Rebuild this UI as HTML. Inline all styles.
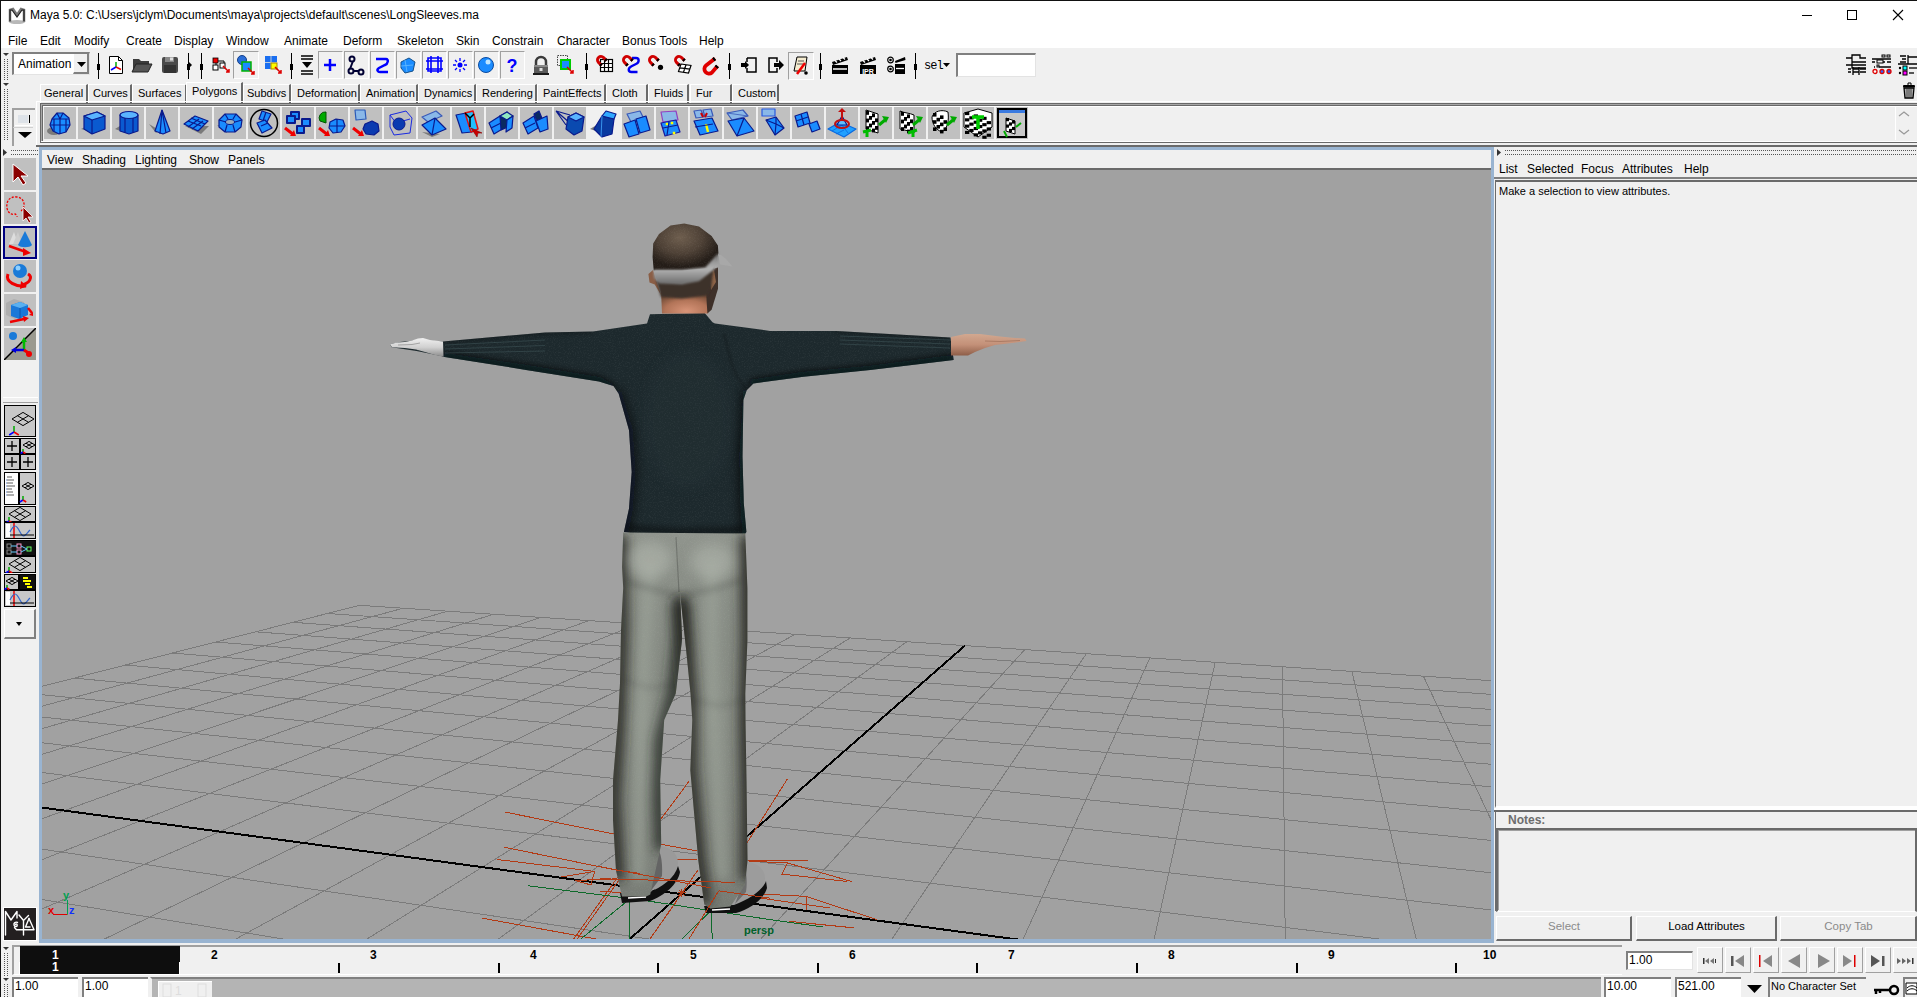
<!DOCTYPE html>
<html><head><meta charset="utf-8">
<style>
*{margin:0;padding:0;box-sizing:border-box}
html,body{width:1917px;height:997px;overflow:hidden;background:#f0f0f0;font-family:"Liberation Sans",sans-serif;font-size:12px;color:#000}
.a{position:absolute}
.t{position:absolute;white-space:nowrap;line-height:1}
.sunk{border-top:1px solid #a0a0a0;border-left:1px solid #a0a0a0;border-bottom:1px solid #fff;border-right:1px solid #fff}
.rais{border-top:1px solid #fff;border-left:1px solid #fff;border-bottom:1px solid #696969;border-right:1px solid #696969}
</style></head><body>
<!-- window border -->
<div class="a" style="left:0;top:0;width:1917px;height:1px;background:#111"></div>
<div class="a" style="left:0;top:0;width:1px;height:997px;background:#111"></div>
<!-- title bar -->
<div class="a" style="left:1px;top:1px;width:1916px;height:47px;background:#fff"></div>
<div id="title" class="t" style="left:30px;top:9px;font-size:12px">Maya 5.0: C:\Users\jclym\Documents\maya\projects\default\scenes\LongSleeves.ma</div>
<svg class="a" style="left:8px;top:7px" width="18" height="17" viewBox="0 0 18 17"><path d="M2 15V3l3-1 4 6 4-6 3 1v12" fill="none" stroke="#777" stroke-width="2.5"/><path d="M2 14V3h2l5 7 5-7h2v11" fill="none" stroke="#222" stroke-width="1.2"/><ellipse cx="9" cy="15" rx="8" ry="2" fill="#888" opacity="0.6"/></svg>
<div class="a" style="left:1802px;top:15px;width:10px;height:1px;background:#000"></div>
<div class="a" style="left:1847px;top:10px;width:10px;height:10px;border:1px solid #000"></div>
<svg class="a" style="left:1892px;top:9px" width="12" height="12" viewBox="0 0 12 12"><path d="M1 1L11 11M11 1L1 11" stroke="#000" stroke-width="1.1"/></svg>
<!-- menu -->
<div id="menu">
<div class="t" style="left:8px;top:35px">File</div>
<div class="t" style="left:40px;top:35px">Edit</div>
<div class="t" style="left:74px;top:35px">Modify</div>
<div class="t" style="left:126px;top:35px">Create</div>
<div class="t" style="left:174px;top:35px">Display</div>
<div class="t" style="left:226px;top:35px">Window</div>
<div class="t" style="left:284px;top:35px">Animate</div>
<div class="t" style="left:343px;top:35px">Deform</div>
<div class="t" style="left:397px;top:35px">Skeleton</div>
<div class="t" style="left:456px;top:35px">Skin</div>
<div class="t" style="left:492px;top:35px">Constrain</div>
<div class="t" style="left:557px;top:35px">Character</div>
<div class="t" style="left:622px;top:35px">Bonus Tools</div>
<div class="t" style="left:699px;top:35px">Help</div>
</div>

<!-- viewport panel -->
<div class="a" style="left:39px;top:147px;width:1455px;height:796px;background:#99b4d1"></div>
<div class="a" style="left:42px;top:150px;width:1449px;height:19px;background:#f0f0f0"></div>
<div class="a" style="left:42px;top:168px;width:1449px;height:2px;background:#6a6a6a"></div>
<div class="a" id="vp" style="left:42px;top:170px;width:1449px;height:769px;background:#a1a1a1;overflow:hidden"><svg width="1449" height="769" viewBox="0 0 1449 769" style="position:absolute;left:0;top:0">
<defs>
<linearGradient id="gShirt" x1="0" y1="0" x2="1" y2="0">
<stop offset="0" stop-color="#0f1619"/><stop offset="0.12" stop-color="#1f2c30"/><stop offset="0.5" stop-color="#2a3a3e"/><stop offset="0.88" stop-color="#1f2c30"/><stop offset="1" stop-color="#0f1619"/></linearGradient>
<linearGradient id="gArm" x1="0" y1="0" x2="0" y2="1">
<stop offset="0" stop-color="#1d292c"/><stop offset="0.5" stop-color="#27353a"/><stop offset="1" stop-color="#111a1d"/></linearGradient>
<linearGradient id="gLeg" x1="0" y1="0" x2="1" y2="0">
<stop offset="0" stop-color="#3d413c"/><stop offset="0.15" stop-color="#8e948c"/><stop offset="0.45" stop-color="#b3b8b0"/><stop offset="0.8" stop-color="#9ea39b"/><stop offset="1" stop-color="#3a3e39"/></linearGradient>
<linearGradient id="gHair" x1="0" y1="0" x2="0" y2="1">
<stop offset="0" stop-color="#4e4236"/><stop offset="0.6" stop-color="#6a5b4c"/><stop offset="1" stop-color="#4a3e33"/></linearGradient>
<linearGradient id="gNeck" x1="0" y1="0" x2="0" y2="1">
<stop offset="0" stop-color="#6e5440"/><stop offset="0.4" stop-color="#b98066"/><stop offset="1" stop-color="#d6957a"/></linearGradient>
<linearGradient id="gBand" x1="0" y1="0" x2="0" y2="1">
<stop offset="0" stop-color="#9a9a9a"/><stop offset="0.5" stop-color="#d2d2d2"/><stop offset="1" stop-color="#8a8a8a"/></linearGradient>
</defs>
<g shape-rendering="crispEdges">
<path d="M317.5 435.3L-3639.9 1445.4 M317.5 435.3L1775.6 532.4 M361.2 438.2L-3666.3 1530.8 M285.4 443.5L1802.5 548.9 M406.0 441.1L-3696.6 1628.8 M250.8 452.3L1832.3 567.3 M451.8 444.2L-3731.7 1742.2 M213.7 461.8L1865.3 587.7 M498.9 447.3L-3772.8 1875.2 M173.7 472.0L1902.2 610.4 M547.1 450.5L-3821.7 2033.3 M130.4 483.0L1943.7 636.0 M596.6 453.8L-3880.7 2224.2 M83.5 495.0L1990.8 665.1 M647.4 457.2L-3953.4 2459.5 M32.3 508.1L2044.6 698.3 M699.6 460.7L-4045.3 2756.6 M-23.5 522.3L2106.7 736.5 M753.2 464.3L-4164.9 3143.4 M-84.8 537.9L2179.1 781.2 M808.2 467.9L-4327.1 3668.1 M-152.3 555.2L2264.6 834.0 M864.8 471.7L-4559.6 4420.2 M-227.1 574.3L2367.3 897.3 M982.8 479.6L-5558.2 7649.8 M-403.8 619.4L2649.6 1071.4 M1044.4 483.7L-6984.9 12264.4 M-509.2 646.3L2851.2 1195.8 M1107.9 487.9L-10573.1 26390.1 M-629.0 676.9L3120.0 1361.6 M1173.2 492.2L-4536.4 26394.1 M-766.4 711.9L3496.2 1593.6 M1240.5 496.7L1500.3 26398.2 M-925.7 752.6L4060.3 1941.6 M1309.8 501.3L7537.0 26402.3 M-1112.5 800.3L4999.9 2521.1 M1381.4 506.1L13573.7 26406.3 M-1334.7 857.0L6877.2 3679.0 M1455.2 511.0L19610.4 26410.4 M-1603.2 925.5L12493.6 7143.2 M1531.4 516.1L25647.1 26414.5 M-1934.3 1010.1L39336.2 26423.7 M1610.1 521.3L31683.8 26418.5 M-2352.8 1116.9L22440.1 26412.3 M1691.5 526.7L37720.5 26422.6 M-2898.5 1256.2L5544.0 26400.9 M1775.6 532.4L43757.2 26426.7 M-3639.9 1445.4L-11352.2 26389.6" stroke="#7b7b7b" stroke-width="1" fill="none"/>
<path d="M923.0 475.6L-4920.8 5588.3 M-310.4 595.6L2492.8 974.7" stroke="#000" stroke-width="2" fill="none"/>
</g>
<g fill="none" stroke="#b33a14" stroke-width="1" shape-rendering="crispEdges">
<polyline points="463.1,642.1 571.9,664.0"/>
<polyline points="619.2,674.4 655.4,680.9"/>
<polyline points="634.0,689.3 655.4,689.3"/>
<polyline points="617.4,651.2 647.0,611.3"/>
<polyline points="462.2,677.2 573.6,700.0"/>
<polyline points="455.2,689.5 552.6,701.4 549.0,715.0 533.0,710.5"/>
<polyline points="519.0,707.0 552.6,701.4"/>
<polyline points="440.3,748.2 556.0,769.3"/>
<polyline points="531.5,769.3 577.0,705.3"/>
<polyline points="535.0,769.3 577.0,710.0"/>
<polyline points="704.6,673.5 745.6,608.6"/>
<polyline points="706.4,690.2 766.0,690.2"/>
<polyline points="706.6,691.1 745.6,693.0 740.0,704.1 805.0,711.5"/>
<polyline points="745.6,693.0 809.6,711.5"/>
<polyline points="677.0,721.7 764.0,726.4 764.0,740.3"/>
<polyline points="764.0,726.4 834.7,749.6"/>
<polyline points="747.5,751.4 812.4,757.9"/>
<polyline points="718.0,728.0 788.0,738.0"/>
<polyline points="608.0,769.0 656.3,699.5"/>
<polyline points="647.0,769.0 676.7,720.8"/>
</g>
<g fill="none" stroke="#0d6a2a" stroke-width="1" shape-rendering="crispEdges">
<polyline points="485.9,715.8 598.0,729.8 728.0,749.6 780.9,757.0"/>
<polyline points="586.8,712.3 587.6,769.3"/>
<polyline points="538.5,769.3 586.8,729.8"/>
<polyline points="669.3,738.4 670.2,769.3"/>
<polyline points="639.6,769.3 667.5,742.0"/>
</g>
<defs>
<filter id="noise" x="0" y="0" width="100%" height="100%"><feTurbulence type="fractalNoise" baseFrequency="0.9" numOctaves="2" seed="3"/><feColorMatrix values="0 0 0 0 0.5  0 0 0 0 0.5  0 0 0 0 0.5  0 0 0 0.35 0"/><feComposite in2="SourceGraphic" operator="in"/></filter>
<linearGradient id="tor" x1="0" y1="0" x2="1" y2="0"><stop offset="0" stop-color="#000" stop-opacity="0.55"/><stop offset="0.18" stop-color="#000" stop-opacity="0.15"/><stop offset="0.5" stop-color="#000" stop-opacity="0"/><stop offset="0.85" stop-color="#000" stop-opacity="0.2"/><stop offset="1" stop-color="#000" stop-opacity="0.6"/></linearGradient>
<linearGradient id="slv" x1="0" y1="0" x2="0" y2="1"><stop offset="0" stop-color="#000" stop-opacity="0.25"/><stop offset="0.45" stop-color="#fff" stop-opacity="0.03"/><stop offset="0.8" stop-color="#000" stop-opacity="0.3"/><stop offset="1" stop-color="#000" stop-opacity="0.6"/></linearGradient>
<linearGradient id="leg" x1="0" y1="0" x2="1" y2="0"><stop offset="0" stop-color="#000" stop-opacity="0.7"/><stop offset="0.08" stop-color="#000" stop-opacity="0.35"/><stop offset="0.25" stop-color="#fff" stop-opacity="0.05"/><stop offset="0.5" stop-color="#000" stop-opacity="0.05"/><stop offset="1" stop-color="#000" stop-opacity="0"/></linearGradient>
<radialGradient id="neckg" cx="0.5" cy="0.9" r="0.7"><stop offset="0" stop-color="#d89478"/><stop offset="0.6" stop-color="#b27458"/><stop offset="1" stop-color="#6e4a36"/></radialGradient>
<linearGradient id="bandg" x1="0" y1="0" x2="0" y2="1"><stop offset="0" stop-color="#707070"/><stop offset="0.5" stop-color="#b4b4b4"/><stop offset="1" stop-color="#6a6a6a"/></linearGradient><filter id="blur1" filterUnits="userSpaceOnUse" x="0" y="0" width="1449" height="769"><feGaussianBlur stdDeviation="1"/></filter>
<radialGradient id="hairg" cx="0.42" cy="0.3" r="0.62"><stop offset="0" stop-color="#6e5e4e"/><stop offset="0.55" stop-color="#4e4136"/><stop offset="1" stop-color="#241d18"/></radialGradient>
</defs>
<clipPath id="cpBody"><polygon points="348.0,174.3 358.0,172.1 377.0,170.0 401.0,171.4 503.0,162.6 551.0,161.5 605.0,153.5 608.0,144.3 662.7,143.0 670.5,152.2 673.0,153.5 728.0,160.9 794.8,160.9 908.4,167.6 911.7,190.1 828.2,200.1 761.5,206.8 711.4,213.5 704.7,220.2 701.4,230.0 700.5,286.4 701.8,333.3 704.4,362.0 701.8,365.5 613.2,366.5 581.9,362.0 587.0,338.5 589.7,302.0 587.0,260.3 576.7,223.8 571.5,216.0 557.0,211.6 484.0,199.9 401.0,186.7 399.3,186.0 374.5,180.9 349.7,177.2"/></clipPath>
<filter id="blur3" filterUnits="userSpaceOnUse" x="0" y="0" width="1449" height="769"><feGaussianBlur stdDeviation="3"/></filter>
<filter id="blur6" filterUnits="userSpaceOnUse" x="0" y="0" width="1449" height="769"><feGaussianBlur stdDeviation="6"/></filter>
<filter id="noise2" x="0" y="0" width="100%" height="100%"><feTurbulence type="fractalNoise" baseFrequency="0.8" numOctaves="2" seed="7"/><feColorMatrix values="0 0 0 0 1  0 0 0 0 1  0 0 0 0 1  1.2 0 0 0 -0.55"/><feComposite in2="SourceGraphic" operator="in"/></filter>
<g clip-path="url(#cpBody)">
<rect x="0" y="0" width="1449" height="769" fill="#1d292d"/>
<rect x="348" y="140" width="640" height="230" fill="#fff" filter="url(#noise2)" opacity="0.13"/>
<polyline fill="none" stroke="#060a0c" stroke-width="7" stroke-opacity="0.8" filter="url(#blur3)" points="401.0,186.0 484.0,198.0 557.0,210.0 571.0,218.0"/>
<polyline fill="none" stroke="#060a0c" stroke-width="7" stroke-opacity="0.8" filter="url(#blur3)" points="912.0,188.0 828.0,199.0 761.0,205.0 708.0,213.0"/>
<polyline fill="none" stroke="#0a1114" stroke-width="4" stroke-opacity="0.5" filter="url(#blur3)" points="401.0,170.0 503.0,161.0 551.0,160.0"/>
<polyline fill="none" stroke="#0a1114" stroke-width="4" stroke-opacity="0.5" filter="url(#blur3)" points="794.0,159.0 908.0,166.0"/>
<polyline fill="none" stroke="#05090b" stroke-width="12" stroke-opacity="0.7" filter="url(#blur6)" points="573.0,220.0 585.0,260.0 588.0,302.0 585.0,340.0 580.0,366.0"/>
<polyline fill="none" stroke="#05090b" stroke-width="12" stroke-opacity="0.8" filter="url(#blur6)" points="707.0,220.0 703.0,286.0 704.0,333.0 706.0,366.0"/>
<ellipse cx="646" cy="250" rx="45" ry="70" fill="#3a4c50" opacity="0.12" filter="url(#blur6)"/>
<path fill="none" stroke="#0a1012" stroke-opacity="0.18" stroke-width="3" filter="url(#blur1)" d="M682.0 164.0C687.0 180.0 688.0 202.0 704.0 218.0"/>
<polyline fill="none" stroke="#05090b" stroke-width="6" stroke-opacity="0.5" filter="url(#blur3)" points="583.0,358.0 638.0,362.0 703.0,360.0"/>
<polyline fill="none" stroke="#40555a" stroke-opacity="0.55" stroke-width="1" points="403.0,175.0 503.0,170.0"/>
<polyline fill="none" stroke="#40555a" stroke-opacity="0.55" stroke-width="1" points="798.0,166.0 908.0,170.0"/>
<polyline fill="none" stroke="#40555a" stroke-opacity="0.55" stroke-width="1" points="403.0,179.0 503.0,175.5"/>
<polyline fill="none" stroke="#40555a" stroke-opacity="0.55" stroke-width="1" points="798.0,170.0 908.0,174.0"/>
<polyline fill="none" stroke="#40555a" stroke-opacity="0.55" stroke-width="1" points="403.0,183.0 503.0,181.0"/>
<polyline fill="none" stroke="#40555a" stroke-opacity="0.55" stroke-width="1" points="798.0,174.0 908.0,178.0"/>
<polyline fill="none" stroke="#000" stroke-width="2" stroke-opacity="0.6" points="581.0,364.0 704.0,365.0"/>
</g>
<linearGradient id="handL" x1="0" y1="0" x2="0" y2="1"><stop offset="0" stop-color="#f0f0f0"/><stop offset="0.5" stop-color="#d0d0d0"/><stop offset="1" stop-color="#8a8a8a"/></linearGradient>
<polygon fill="url(#handL)" points="348.0,174.3 355.0,172.5 363.0,172.0 370.0,170.5 376.0,168.5 381.0,168.0 388.0,170.0 401.0,171.4 401.5,186.8 393.0,185.0 383.0,182.0 374.0,179.5 363.0,178.0 350.0,177.2"/>
<polyline fill="none" stroke="#777" stroke-opacity="0.7" stroke-width="0.8" points="356.0,175.0 370.0,174.5 378.0,173.0"/>
<linearGradient id="handR" x1="0" y1="0" x2="0" y2="1"><stop offset="0" stop-color="#d2a890"/><stop offset="0.5" stop-color="#c39078"/><stop offset="1" stop-color="#8e5e48"/></linearGradient>
<polygon fill="url(#handR)" points="909.0,167.0 923.0,164.0 938.0,164.0 958.0,166.5 973.0,168.0 983.0,168.5 984.5,171.0 970.0,173.0 953.0,175.0 943.0,178.0 933.0,182.0 926.0,185.5 909.0,185.5"/>
<polyline fill="none" stroke="#8a5a46" stroke-opacity="0.6" stroke-width="0.8" points="943.0,171.0 958.0,171.5 978.0,170.5"/>
<polygon fill="url(#neckg)" points="619.0,120.0 620.0,143.5 666.0,143.5 670.0,130.0 670.0,118.0"/>
<polygon fill="#3e3029" points="666.4,99.7 676.0,97.6 676.0,118.7 669.6,139.7 665.4,143.5 664.0,120.0"/>
<polygon fill="#a07050" opacity="0.8" points="667.0,102.0 672.0,100.0 674.0,112.0 669.0,120.0"/>
<polygon fill="#8a5e46" points="606.4,104.0 611.0,100.0 619.0,125.0 612.7,114.5 607.5,112.4"/>
<polygon fill="#3e3129" filter="url(#blur1)" points="614.0,110.0 640.0,113.0 671.7,98.0 669.0,118.0 665.4,125.5 640.0,128.5 619.0,127.0"/>
<polygon fill="url(#hairg)" points="611.7,100.5 610.6,87.1 611.2,73.4 617.0,64.0 628.5,55.5 642.2,53.4 657.0,56.6 669.6,66.0 675.9,75.5 676.4,83.0 671.7,99.7 663.3,98.5 640.1,100.5"/>
<rect x="610" y="53" width="66" height="48" fill="#fff" filter="url(#noise2)" opacity="0.12" clip-path="url(#cpDome)"/>
<clipPath id="cpDome"><polygon points="611.7,100.5 610.6,87.1 611.2,73.4 617.0,64.0 628.5,55.5 642.2,53.4 657.0,56.6 669.6,66.0 675.9,75.5 676.4,83.0 671.7,99.7 663.3,98.5 640.1,100.5"/></clipPath>
<polygon fill="url(#bandg)" filter="url(#blur1)" points="611.7,99.7 640.1,99.7 663.3,97.6 676.4,82.9 676.4,95.5 671.7,99.7 657.0,111.3 640.0,114.5 617.0,113.4 612.0,108.0"/>
<polygon fill="#a8a8a8" points="676.4,84.5 679.0,85.0 684.0,89.0 690.6,96.6 678.0,94.5"/>
<path fill="#9a9a9a" d="M613.0 676.0 C626.0 675.0 636.0 682.0 636.0 693.0 C636.0 703.0 627.0 711.0 614.0 719.0 L598.0 726.0 L613.0 700.0 Z"/>
<path fill="#000" opacity="0.35" d="M613.0 676.0 C618.0 678.0 621.0 690.0 620.0 706.0 L608.0 722.0 L598.0 726.0 L613.0 700.0 Z"/>
<path fill="#101010" d="M578.0 723.0 L606.0 723.0 C620.0 717.0 633.0 708.0 636.0 696.0 L638.0 702.0 C636.0 714.0 622.0 726.0 608.0 731.0 L580.0 733.0 Z"/>
<path fill="#9c9c9c" d="M700.0 692.0 C714.0 691.0 723.0 698.0 723.0 709.0 C723.0 719.0 712.0 727.0 698.0 734.0 L684.0 738.0 L700.0 715.0 Z"/>
<path fill="#000" opacity="0.3" d="M700.0 692.0 C704.0 696.0 706.0 710.0 704.0 722.0 L693.0 734.0 L700.0 715.0 Z"/>
<path fill="#101010" d="M662.0 736.0 L692.0 735.0 C708.0 729.0 721.0 720.0 724.0 711.0 L725.0 718.0 C722.0 729.0 708.0 739.0 694.0 743.0 L664.0 743.0 Z"/>
<polyline fill="none" stroke="#fff" stroke-width="1.5" points="586.0,728.0 604.0,727.0"/>
<polyline fill="none" stroke="#fff" stroke-width="1.5" points="670.0,740.0 688.0,739.0"/>
<clipPath id="cpLegs"><polygon points="581.2,362.4 638.0,363.0 638.0,422.4 640.1,468.7 633.8,523.4 622.2,550.0 618.2,610.2 619.2,674.4 608.2,724.5 604.2,726.5 580.0,726.5 574.0,700.5 571.0,650.3 571.0,610.2 576.0,550.0 578.0,513.0 579.0,460.0 581.2,418.0 580.1,397.0"/><polygon points="638.0,363.0 703.3,363.4 705.4,418.0 705.4,470.8 703.3,523.4 703.5,550.0 704.5,610.2 705.5,690.4 703.0,715.0 688.4,736.6 668.4,738.6 662.3,734.6 656.3,690.4 648.3,600.2 650.3,550.0 648.5,523.4 644.3,481.3 638.0,422.4"/></clipPath>
<g clip-path="url(#cpLegs)">
<rect x="0" y="0" width="1449" height="769" fill="#878c84"/>
<linearGradient id="legv" x1="0" y1="0" x2="0" y2="1"><stop offset="0" stop-color="#fff" stop-opacity="0.08"/><stop offset="0.5" stop-color="#000" stop-opacity="0"/><stop offset="1" stop-color="#000" stop-opacity="0.12"/></linearGradient>
<rect x="568" y="360" width="140" height="380" fill="url(#legv)"/>
<rect x="568" y="360" width="140" height="390" fill="#fff" filter="url(#noise2)" opacity="0.12"/>
<polyline fill="none" stroke="#a4aaa0" stroke-opacity="0.6" stroke-width="12" filter="url(#blur6)" points="608.0,390.0 603.0,470.0 600.0,550.0 598.0,630.0 596.0,710.0"/>
<polyline fill="none" stroke="#a4aaa0" stroke-opacity="0.6" stroke-width="12" filter="url(#blur6)" points="670.0,390.0 670.0,470.0 672.0,550.0 676.0,630.0 680.0,710.0"/>
<polyline fill="none" stroke="#262924" stroke-opacity="0.95" stroke-width="14" filter="url(#blur6)" points="578.0,365.0 579.0,460.0 576.0,550.0 571.0,630.0 575.0,710.0"/>
<polyline fill="none" stroke="#262924" stroke-opacity="0.85" stroke-width="14" filter="url(#blur6)" points="638.0,430.0 638.0,470.0 632.0,523.0 620.0,570.0 618.0,630.0 620.0,680.0"/>
<polyline fill="none" stroke="#262924" stroke-opacity="0.95" stroke-width="14" filter="url(#blur6)" points="639.0,428.0 644.0,481.0 648.0,530.0 648.0,600.0 656.0,690.0 663.0,735.0"/>
<polyline fill="none" stroke="#262924" stroke-opacity="0.95" stroke-width="16" filter="url(#blur6)" points="706.0,365.0 707.0,470.0 705.0,550.0 707.0,630.0 707.0,710.0"/>
<ellipse cx="608" cy="390" rx="22" ry="18" fill="#b4b9b0" opacity="0.55" filter="url(#blur6)"/>
<ellipse cx="670" cy="392" rx="22" ry="18" fill="#b4b9b0" opacity="0.5" filter="url(#blur6)"/>
<polyline fill="none" stroke="#000" stroke-opacity="0.12" stroke-width="6" filter="url(#blur3)" points="586.0,412.0 613.0,420.0 638.0,426.0 668.0,420.0 700.0,410.0"/>
<polyline fill="none" stroke="#000" stroke-opacity="0.2" stroke-width="1.2" points="634.0,367.0 637.0,422.0"/>
<polyline fill="none" stroke="#000" stroke-opacity="0.1" stroke-width="4" filter="url(#blur3)" points="580.0,510.0 608.0,518.0 633.0,514.0"/>
<polyline fill="none" stroke="#000" stroke-opacity="0.1" stroke-width="4" filter="url(#blur3)" points="650.0,530.0 678.0,536.0 704.0,530.0"/>
</g>
<text x="702" y="764" font-family="Liberation Sans" font-weight="bold" font-size="11" fill="#00602a">persp</text>
<g fill="none" stroke="#b33a14" stroke-width="1" shape-rendering="crispEdges">
<polyline points="558.0,696.7 669.3,718.0"/>
<polyline points="558.0,708.7 693.4,712.4"/>
<polyline points="676.7,720.8 728.0,728.2"/>
<polyline points="573.6,700.0 598.0,703.5"/>
<polyline points="557.8,721.0 579.0,722.8"/>
<polyline points="533.0,710.5 575.0,708.8"/>
<polyline points="647.0,769.0 676.7,720.8"/>
<polyline points="608.0,769.0 634.0,732.0"/>
<path d="M635.6 722.7h8M639.6 718.7v8M636.6 719.7l6 6M636.6 725.7l6 -6"/>
</g>
<g stroke-width="1" fill="none">
<polyline points="11.0,744.5 25.5,744.5" stroke="#e00000"/>
<polyline points="25.5,730.0 25.5,744.5" stroke="#00a050"/>
</g>
<text x="6" y="744" font-family="Liberation Sans" font-weight="bold" font-size="11" fill="#e00000">x</text>
<text x="21" y="729" font-family="Liberation Sans" font-weight="bold" font-size="11" fill="#00a050">y</text>
<text x="27" y="744" font-family="Liberation Sans" font-weight="bold" font-size="11" fill="#1030ff">z</text>
</svg></div>
<div class="t" style="left:47px;top:154px">View</div>
<div class="t" style="left:82px;top:154px">Shading</div>
<div class="t" style="left:135px;top:154px">Lighting</div>
<div class="t" style="left:189px;top:154px">Show</div>
<div class="t" style="left:228px;top:154px">Panels</div>

<!-- right panel -->
<div class="t" style="left:1499px;top:163px">List</div>
<div class="t" style="left:1527px;top:163px">Selected</div>
<div class="t" style="left:1581px;top:163px">Focus</div>
<div class="t" style="left:1622px;top:163px">Attributes</div>
<div class="t" style="left:1684px;top:163px">Help</div>
<div class="a" style="left:1494px;top:177px;width:423px;height:2px;background:#808080"></div>
<div class="a" style="left:1495px;top:180px;width:422px;height:628px;border-top:2px solid #6a6a6a;border-left:1px solid #6a6a6a;border-bottom:2px solid #fff"></div>
<div class="t" style="left:1499px;top:186px;font-size:11px">Make a selection to view attributes.</div>

<svg class="a" style="left:3px;top:52px" width="6" height="28" viewBox="0 0 6 28"><path d="M0 1h6L3 4z" fill="#333"/><rect x="1" y="7" width="1" height="1" fill="#555"/><rect x="4" y="7" width="1" height="1" fill="#555"/><rect x="1" y="9" width="1" height="1" fill="#555"/><rect x="4" y="9" width="1" height="1" fill="#555"/><rect x="1" y="11" width="1" height="1" fill="#555"/><rect x="4" y="11" width="1" height="1" fill="#555"/><rect x="1" y="13" width="1" height="1" fill="#555"/><rect x="4" y="13" width="1" height="1" fill="#555"/><rect x="1" y="15" width="1" height="1" fill="#555"/><rect x="4" y="15" width="1" height="1" fill="#555"/><rect x="1" y="17" width="1" height="1" fill="#555"/><rect x="4" y="17" width="1" height="1" fill="#555"/><rect x="1" y="19" width="1" height="1" fill="#555"/><rect x="4" y="19" width="1" height="1" fill="#555"/><rect x="1" y="21" width="1" height="1" fill="#555"/><rect x="4" y="21" width="1" height="1" fill="#555"/><rect x="1" y="23" width="1" height="1" fill="#555"/><rect x="4" y="23" width="1" height="1" fill="#555"/><rect x="1" y="25" width="1" height="1" fill="#555"/><rect x="4" y="25" width="1" height="1" fill="#555"/><rect x="1" y="27" width="1" height="1" fill="#555"/><rect x="4" y="27" width="1" height="1" fill="#555"/></svg>
<div class="a" style="left:12px;top:52px;width:78px;height:23px;background:#fff;border-top:2px solid #808080;border-left:2px solid #808080;border-bottom:1px solid #e3e3e3;border-right:1px solid #e3e3e3"></div>
<div class="a" style="left:73px;top:54px;width:16px;height:20px;background:#f0f0f0;border-left:1px solid #fff;border-bottom:2px solid #808080;border-right:2px solid #808080"></div>
<svg class="a" style="left:77px;top:62px" width="9" height="5" viewBox="0 0 9 5"><path d="M0 0h9L4.5 5z" fill="#000"/></svg>
<div class="t" style="left:18px;top:58px;font-size:12px">Animation</div>
<div class="a" style="left:98px;top:53px;width:1px;height:26px;background:#000"></div>
<div class="a" style="left:97px;top:64px;width:3px;height:6px;background:#000"></div>
<svg class="a" style="left:108px;top:55px" width="16" height="20" viewBox="0 0 16 20"><path d="M1.5 1.5h9l4 4v13h-13z" fill="#fff" stroke="#000"/><path d="M10.5 1.5v4h4" fill="none" stroke="#000"/><path d="M8 12v-5" stroke="#0a0" stroke-width="1.5"/><path d="M8 12l-5 3" stroke="#00f" stroke-width="1.5"/><path d="M8 12l5 2.5" stroke="#e00" stroke-width="1.5"/></svg>
<svg class="a" style="left:131px;top:56px" width="22" height="18" viewBox="0 0 22 18"><path d="M2 3h6l2 2h8v4H6L2 15z" fill="#3c3c3c"/><path d="M5 8h16l-4 8H1z" fill="#555" stroke="#222"/></svg>
<svg class="a" style="left:161px;top:56px" width="18" height="18" viewBox="0 0 18 18"><rect x="1" y="1" width="16" height="16" rx="2" fill="#4a4a4a"/><rect x="4" y="1" width="9" height="5" fill="#888"/><rect x="9" y="1.5" width="3" height="3" fill="#ddd"/><rect x="3" y="9" width="12" height="8" fill="#333"/></svg>
<div class="a" style="left:188px;top:53px;width:1px;height:26px;background:#000"></div>
<div class="a" style="left:187px;top:64px;width:3px;height:6px;background:#000"></div>
<svg class="a" style="left:188px;top:61px" width="4" height="8" viewBox="0 0 4 8"><path d="M0 0L4 4L0 8z" fill="#000"/></svg>
<div class="a" style="left:201px;top:53px;width:1px;height:26px;background:#000"></div>
<div class="a" style="left:200px;top:64px;width:3px;height:6px;background:#000"></div>
<svg class="a" style="left:211px;top:53px" width="20" height="22" viewBox="0 0 20 22"><rect x="2" y="5" width="5" height="5" fill="#e00" stroke="#000" stroke-width="0.8"/><rect x="2" y="12" width="5" height="5" fill="#fff" stroke="#000"/><path d="M5 10v2M7 8h6v4" fill="none" stroke="#000"/><rect x="9" y="10" width="5" height="5" fill="#fff" stroke="#000"/><path d="M12 13l6 6M15 19h3v-3" stroke="#d00" stroke-width="1.5" fill="none"/></svg>
<div class="a" style="left:233px;top:51px;width:26px;height:28px;border-top:1px solid #a0a0a0;border-left:1px solid #a0a0a0;border-right:1px solid #fff;border-bottom:1px solid #fff"></div>
<svg class="a" style="left:236px;top:54px" width="20" height="22" viewBox="0 0 20 22"><circle cx="6" cy="6" r="4.5" fill="#2a6ed8" stroke="#14408a"/><rect x="6" y="8" width="9" height="9" fill="#1a8cff" stroke="#00b000" stroke-width="1.5"/><path d="M12 14l6 6M15 20h3v-3" stroke="#d00" stroke-width="1.5" fill="none"/></svg>
<svg class="a" style="left:263px;top:53px" width="20" height="22" viewBox="0 0 20 22"><rect x="2" y="3" width="12" height="13" fill="#1a6ef0"/><path d="M8 3v13M2 9.5h12" stroke="#bcd" stroke-width="1"/><rect x="8" y="10" width="6" height="6" fill="#ff0" stroke="#a80"/><path d="M12 14l6 6M15 20h3v-3" stroke="#d00" stroke-width="1.5" fill="none"/></svg>
<div class="a" style="left:291px;top:53px;width:1px;height:26px;background:#000"></div>
<div class="a" style="left:290px;top:64px;width:3px;height:6px;background:#000"></div>
<svg class="a" style="left:300px;top:54px" width="14" height="22" viewBox="0 0 14 22"><path d="M1 2h12M1 5h12" stroke="#000" stroke-width="1.5"/><path d="M2 8h10L7 14z" fill="#000"/><path d="M1 17h12M1 20h12" stroke="#000" stroke-width="1.5"/></svg>
<div class="a" style="left:318px;top:51px;width:25px;height:28px;border-top:1px solid #a0a0a0;border-left:1px solid #a0a0a0;border-right:1px solid #fff;border-bottom:1px solid #fff"></div>
<svg class="a" style="left:318px;top:53px" width="25" height="24" viewBox="0 0 25 24"><path d="M12 6v12M6 12h12" stroke="#00f" stroke-width="2.5"/></svg>
<div class="a" style="left:344px;top:51px;width:25px;height:28px;border-top:1px solid #a0a0a0;border-left:1px solid #a0a0a0;border-right:1px solid #fff;border-bottom:1px solid #fff"></div>
<svg class="a" style="left:344px;top:53px" width="25" height="24" viewBox="0 0 25 24"><circle cx="8" cy="6" r="2.5" fill="none" stroke="#003" stroke-width="2"/><circle cx="7" cy="18" r="2.5" fill="none" stroke="#003" stroke-width="2"/><circle cx="17" cy="19" r="2.5" fill="none" stroke="#003" stroke-width="2"/><path d="M9 8L6 16M9 18h6" stroke="#003" stroke-width="2"/></svg>
<div class="a" style="left:370px;top:51px;width:25px;height:28px;border-top:1px solid #a0a0a0;border-left:1px solid #a0a0a0;border-right:1px solid #fff;border-bottom:1px solid #fff"></div>
<svg class="a" style="left:370px;top:53px" width="25" height="24" viewBox="0 0 25 24"><path d="M6 6h10c3 0 2 5-1 6l-6 3c-3 2-1 4 1 4h8" fill="none" stroke="#00f" stroke-width="2.5"/></svg>
<div class="a" style="left:396px;top:51px;width:25px;height:28px;border-top:1px solid #a0a0a0;border-left:1px solid #a0a0a0;border-right:1px solid #fff;border-bottom:1px solid #fff"></div>
<svg class="a" style="left:396px;top:53px" width="25" height="24" viewBox="0 0 25 24"><path d="M5 9l8-4 6 4-2 9-8 2-4-5z" fill="#1a8cff" stroke="#14508a"/><path d="M9 7l2 12M5 13l12-1" stroke="#6bf" stroke-width="0.8"/></svg>
<div class="a" style="left:422px;top:51px;width:25px;height:28px;border-top:1px solid #a0a0a0;border-left:1px solid #a0a0a0;border-right:1px solid #fff;border-bottom:1px solid #fff"></div>
<svg class="a" style="left:422px;top:53px" width="25" height="24" viewBox="0 0 25 24"><path d="M6 5h13v13H6z M4 8h17M4 16h17M9 3v17M16 3v17" fill="none" stroke="#00f" stroke-width="1.6"/></svg>
<div class="a" style="left:448px;top:51px;width:25px;height:28px;border-top:1px solid #a0a0a0;border-left:1px solid #a0a0a0;border-right:1px solid #fff;border-bottom:1px solid #fff"></div>
<svg class="a" style="left:448px;top:53px" width="25" height="24" viewBox="0 0 25 24"><circle cx="12" cy="12" r="2.5" fill="#00f"/><path d="M12 5v3M12 16v3M5 12h3M16 12h3M7 7l2 2M15 15l2 2M7 17l2-2M15 9l2-2" stroke="#00f" stroke-width="1.3"/></svg>
<div class="a" style="left:474px;top:51px;width:25px;height:28px;border-top:1px solid #a0a0a0;border-left:1px solid #a0a0a0;border-right:1px solid #fff;border-bottom:1px solid #fff"></div>
<svg class="a" style="left:474px;top:53px" width="25" height="24" viewBox="0 0 25 24"><circle cx="12" cy="12" r="7.5" fill="#1a8cff" stroke="#0a4aa0"/><circle cx="14" cy="9" r="2.5" fill="#bfe6ff"/></svg>
<div class="a" style="left:500px;top:51px;width:25px;height:28px;border-top:1px solid #a0a0a0;border-left:1px solid #a0a0a0;border-right:1px solid #fff;border-bottom:1px solid #fff"></div>
<svg class="a" style="left:500px;top:53px" width="25" height="24" viewBox="0 0 25 24"><text x="12" y="19" text-anchor="middle" font-family="Liberation Sans" font-weight="bold" font-size="18" fill="#00f">?</text></svg>
<svg class="a" style="left:532px;top:54px" width="18" height="22" viewBox="0 0 18 22"><path d="M4 11V8a5 5 0 0 1 10 0v3" fill="none" stroke="#3a3a3a" stroke-width="2.5"/><rect x="2" y="11" width="14" height="9" fill="#5a5a5a"/><rect x="2" y="11" width="14" height="2" fill="#888"/><rect x="7.5" y="14" width="3" height="3" fill="#ddd"/><rect x="1" y="19" width="16" height="2" fill="#1a1a1a"/></svg>
<svg class="a" style="left:556px;top:54px" width="20" height="22" viewBox="0 0 20 22"><rect x="1.5" y="1.5" width="10" height="10" fill="none" stroke="#444" stroke-dasharray="1.5 1"/><rect x="5" y="6" width="9" height="9" fill="#1a8cff" stroke="#0c0" stroke-width="2"/><path d="M11 13l6 6M14 19h3v-3" stroke="#d00" stroke-width="1.5" fill="none"/></svg>
<div class="a" style="left:586px;top:53px;width:1px;height:26px;background:#000"></div>
<div class="a" style="left:585px;top:64px;width:3px;height:6px;background:#000"></div>
<svg class="a" style="left:596px;top:54px" width="20" height="22" viewBox="0 0 20 22"><rect x="4.5" y="5.5" width="12" height="12" fill="#fff" stroke="#000" stroke-width="1.2"/><path d="M8.5 5.5v12M12.5 5.5v12M4.5 9.5h12M4.5 13.5h12" stroke="#000" stroke-width="1.2"/><path d="M5.6 11.5L2.5 8.4A3.5 3.5 0 0 1 7.5 3.5L10.6 6.6" fill="none" stroke="#d00000" stroke-width="3"/><path d="M5.6 11.5L4.2 10.1M10.6 6.6L9.2 5.2" stroke="#000" stroke-width="3"/></svg>
<svg class="a" style="left:622px;top:54px" width="20" height="22" viewBox="0 0 20 22"><path d="M10 4H14C17.5 4 17.5 8.5 14 10L9.5 12.3C5.8 14.2 5.8 18 9.5 18H15.5" fill="none" stroke="#0000f0" stroke-width="2.4"/><path d="M5.6 11.5L2.5 8.4A3.5 3.5 0 0 1 7.5 3.5L10.6 6.6" fill="none" stroke="#d00000" stroke-width="3"/><path d="M5.6 11.5L4.2 10.1M10.6 6.6L9.2 5.2" stroke="#000" stroke-width="3"/></svg>
<svg class="a" style="left:648px;top:54px" width="20" height="22" viewBox="0 0 20 22"><path d="M5.6 11.5L2.5 8.4A3.5 3.5 0 0 1 7.5 3.5L10.6 6.6" fill="none" stroke="#d00000" stroke-width="3"/><path d="M5.6 11.5L4.2 10.1M10.6 6.6L9.2 5.2" stroke="#000" stroke-width="3"/><circle cx="12.5" cy="13.3" r="2.6" fill="#000"/></svg>
<svg class="a" style="left:674px;top:54px" width="22" height="22" viewBox="0 0 22 22"><path d="M7 10l10 1.5-2.5 7.5L4.5 17.5z M6 13.8l10 1.3M12 10.7l-2.5 7.6" fill="#fff" stroke="#000" stroke-width="1.2"/><path d="M5.6 11.5L2.5 8.4A3.5 3.5 0 0 1 7.5 3.5L10.6 6.6" fill="none" stroke="#d00000" stroke-width="3"/><path d="M5.6 11.5L4.2 10.1M10.6 6.6L9.2 5.2" stroke="#000" stroke-width="3"/></svg>
<svg class="a" style="left:701px;top:54px" width="18" height="22" viewBox="0 0 18 22"><path d="M14 4.5L5 11.5A4.5 4.5 0 0 0 11 18.5L16.5 12" fill="none" stroke="#e00000" stroke-width="3.8"/><path d="M14 4.5L12.3 5.8M16.5 12L15.1 13.6" stroke="#000" stroke-width="3.8"/></svg>
<div class="a" style="left:729px;top:53px;width:1px;height:26px;background:#000"></div>
<div class="a" style="left:728px;top:64px;width:3px;height:6px;background:#000"></div>
<svg class="a" style="left:740px;top:56px" width="18" height="18" viewBox="0 0 18 18"><path d="M7 2h9v14H7v-4M7 6V2" fill="none" stroke="#000" stroke-width="1.5"/><path d="M1 7h4v-2l4 4-4 4v-2H1z" fill="#000"/></svg>
<svg class="a" style="left:768px;top:56px" width="18" height="18" viewBox="0 0 18 18"><path d="M9 6V2H1v14h8v-4" fill="none" stroke="#000" stroke-width="1.5"/><path d="M6 7h5v-3l5 5-5 5v-3H6z" fill="#000"/></svg>
<div class="a" style="left:788px;top:52px;width:26px;height:28px;border-top:1px solid #a0a0a0;border-left:1px solid #a0a0a0;border-right:1px solid #fff;border-bottom:1px solid #fff"></div>
<svg class="a" style="left:791px;top:55px" width="20" height="22" viewBox="0 0 20 22"><path d="M6 2h10l-2 14H3z" fill="#f5ecd0" stroke="#000"/><path d="M7 6h6M6 9h6" stroke="#555"/><path d="M14 8L6 19" stroke="#e00" stroke-width="2.5"/><circle cx="15" cy="18" r="1.8" fill="#000"/></svg>
<div class="a" style="left:820px;top:53px;width:1px;height:26px;background:#000"></div>
<div class="a" style="left:819px;top:64px;width:3px;height:6px;background:#000"></div>
<svg class="a" style="left:831px;top:54px" width="19" height="22" viewBox="0 0 19 22"><path d="M1 8l15-5 1 3L2 11z" fill="#000"/><path d="M4 6.5l2 2M8 5l2 2M12 3.5l2 2" stroke="#fff" stroke-width="1.2"/><rect x="1" y="11" width="16" height="9" fill="#000"/><path d="M2 15h14" stroke="#fff" stroke-width="1.5"/></svg>
<svg class="a" style="left:859px;top:54px" width="19" height="22" viewBox="0 0 19 22"><path d="M1 8l15-5 1 3L2 11z" fill="#000"/><path d="M4 6.5l2 2M8 5l2 2M12 3.5l2 2" stroke="#fff" stroke-width="1.2"/><rect x="1" y="11" width="16" height="9" fill="#000"/><text x="9" y="19.5" text-anchor="middle" font-family="Liberation Sans" font-weight="bold" font-size="7" fill="#fff">IPR</text></svg>
<svg class="a" style="left:887px;top:54px" width="19" height="22" viewBox="0 0 19 22"><circle cx="3.5" cy="6" r="2.8" fill="none" stroke="#000" stroke-width="1.2"/><circle cx="3.5" cy="6" r="1.3" fill="#000"/><circle cx="3.5" cy="15" r="2.8" fill="none" stroke="#000" stroke-width="1.2"/><circle cx="3.5" cy="15" r="1.3" fill="#000"/><path d="M8 7l10-4 0.5 3L8.5 9z" fill="#000"/><rect x="8" y="10" width="10" height="10" fill="#000"/><path d="M9 14.5h8" stroke="#fff" stroke-width="1.3"/></svg>
<div class="a" style="left:915px;top:53px;width:1px;height:26px;background:#000"></div>
<div class="a" style="left:914px;top:64px;width:3px;height:6px;background:#000"></div>
<div class="t" style="left:924px;top:60px;font-family:'Liberation Mono',monospace;font-size:12px;letter-spacing:-1px">sel</div>
<svg class="a" style="left:943px;top:63px" width="7" height="4" viewBox="0 0 7 4"><path d="M0 0h7L3.5 4z" fill="#000"/></svg>
<div class="a" style="left:956px;top:53px;width:80px;height:24px;background:#fff;border-top:2px solid #808080;border-left:2px solid #808080;border-bottom:1px solid #e3e3e3;border-right:1px solid #e3e3e3"></div>
<svg class="a" style="left:1845px;top:54px" width="22" height="22" viewBox="0 0 22 22"><path d="M1 4h6V1h8v3h6M7 4v4h14M1 11h20M7 8v6h14" fill="none" stroke="#000" stroke-width="1.3"/><path d="M3 15h3M3 18h3M15 15h6M15 18h6M8 13v8M8 15h6M8 18h6M14 13v8" fill="none" stroke="#000" stroke-width="1.3"/></svg>
<svg class="a" style="left:1871px;top:54px" width="22" height="22" viewBox="0 0 22 22"><rect x="11" y="1" width="3" height="2" fill="none" stroke="#000"/><rect x="16" y="1" width="3" height="2" fill="none" stroke="#000"/><path d="M1 5h19M1 8h3M16 8h4M12 8h2M3 13h1M8 13h12" stroke="#000" stroke-width="1.3"/><rect x="6" y="6" width="6" height="3" fill="none" stroke="#000"/><rect x="6" y="11" width="2" height="2" fill="none" stroke="#000"/><circle cx="4" cy="17.5" r="2" fill="#fff" stroke="#d00" stroke-width="1.3"/><circle cx="11" cy="17.5" r="2" fill="#36f" stroke="#d00" stroke-width="1.3"/><circle cx="18" cy="17.5" r="2" fill="#1a5cff" stroke="#d00" stroke-width="1.3"/></svg>
<svg class="a" style="left:1897px;top:54px" width="20" height="22" viewBox="0 0 20 22"><path d="M3 2h6M5 5h4M3 8h6M1 10h19M11 1v9M11 3h9" stroke="#000" stroke-width="1.3"/><circle cx="3" cy="14" r="1.2" fill="#000"/><rect x="6" y="12" width="4" height="4" fill="#0ff" stroke="#000"/><path d="M12 14h8" stroke="#000" stroke-width="1.3"/><circle cx="3" cy="19" r="1.2" fill="#000"/><rect x="6" y="17" width="4" height="4" fill="#f0f" stroke="#000"/><path d="M12 19h5" stroke="#000" stroke-width="1.3"/></svg>
<svg class="a" style="left:1902px;top:82px" width="14" height="17" viewBox="0 0 14 17"><rect x="1" y="3" width="12" height="2.5" rx="1" fill="#000"/><path d="M6 3V1h3v2" fill="none" stroke="#000"/><path d="M2 6h10l-1 10H3z" fill="#aaa" stroke="#000" stroke-width="1.3"/><path d="M5 7v8M7 7v8M9 7v8" stroke="#333" stroke-width="0.8"/></svg>
<svg class="a" style="left:3px;top:82px" width="6" height="66" viewBox="0 0 6 66"><path d="M0 1h6L3 4z" fill="#333"/><rect x="1" y="7" width="1" height="1" fill="#555"/><rect x="4" y="7" width="1" height="1" fill="#555"/><rect x="1" y="9" width="1" height="1" fill="#555"/><rect x="4" y="9" width="1" height="1" fill="#555"/><rect x="1" y="11" width="1" height="1" fill="#555"/><rect x="4" y="11" width="1" height="1" fill="#555"/><rect x="1" y="13" width="1" height="1" fill="#555"/><rect x="4" y="13" width="1" height="1" fill="#555"/><rect x="1" y="15" width="1" height="1" fill="#555"/><rect x="4" y="15" width="1" height="1" fill="#555"/><rect x="1" y="17" width="1" height="1" fill="#555"/><rect x="4" y="17" width="1" height="1" fill="#555"/><rect x="1" y="19" width="1" height="1" fill="#555"/><rect x="4" y="19" width="1" height="1" fill="#555"/><rect x="1" y="21" width="1" height="1" fill="#555"/><rect x="4" y="21" width="1" height="1" fill="#555"/><rect x="1" y="23" width="1" height="1" fill="#555"/><rect x="4" y="23" width="1" height="1" fill="#555"/><rect x="1" y="25" width="1" height="1" fill="#555"/><rect x="4" y="25" width="1" height="1" fill="#555"/><rect x="1" y="27" width="1" height="1" fill="#555"/><rect x="4" y="27" width="1" height="1" fill="#555"/><rect x="1" y="29" width="1" height="1" fill="#555"/><rect x="4" y="29" width="1" height="1" fill="#555"/><rect x="1" y="31" width="1" height="1" fill="#555"/><rect x="4" y="31" width="1" height="1" fill="#555"/><rect x="1" y="33" width="1" height="1" fill="#555"/><rect x="4" y="33" width="1" height="1" fill="#555"/><rect x="1" y="35" width="1" height="1" fill="#555"/><rect x="4" y="35" width="1" height="1" fill="#555"/><rect x="1" y="37" width="1" height="1" fill="#555"/><rect x="4" y="37" width="1" height="1" fill="#555"/><rect x="1" y="39" width="1" height="1" fill="#555"/><rect x="4" y="39" width="1" height="1" fill="#555"/><rect x="1" y="41" width="1" height="1" fill="#555"/><rect x="4" y="41" width="1" height="1" fill="#555"/><rect x="1" y="43" width="1" height="1" fill="#555"/><rect x="4" y="43" width="1" height="1" fill="#555"/><rect x="1" y="45" width="1" height="1" fill="#555"/><rect x="4" y="45" width="1" height="1" fill="#555"/><rect x="1" y="47" width="1" height="1" fill="#555"/><rect x="4" y="47" width="1" height="1" fill="#555"/><rect x="1" y="49" width="1" height="1" fill="#555"/><rect x="4" y="49" width="1" height="1" fill="#555"/><rect x="1" y="51" width="1" height="1" fill="#555"/><rect x="4" y="51" width="1" height="1" fill="#555"/><rect x="1" y="53" width="1" height="1" fill="#555"/><rect x="4" y="53" width="1" height="1" fill="#555"/><rect x="1" y="55" width="1" height="1" fill="#555"/><rect x="4" y="55" width="1" height="1" fill="#555"/><rect x="1" y="57" width="1" height="1" fill="#555"/><rect x="4" y="57" width="1" height="1" fill="#555"/></svg>
<div class="a" style="left:40px;top:84px;width:48px;height:19px;background:#ececec;border-top:1px solid #fff;border-left:1px solid #fff;border-right:2px solid #6a6a6a"></div>
<div class="t" style="left:44px;top:88px;font-size:11px">General</div>
<div class="a" style="left:88px;top:84px;width:44px;height:19px;background:#ececec;border-top:1px solid #fff;border-left:1px solid #fff;border-right:2px solid #6a6a6a"></div>
<div class="t" style="left:93px;top:88px;font-size:11px">Curves</div>
<div class="a" style="left:132px;top:84px;width:55px;height:19px;background:#ececec;border-top:1px solid #fff;border-left:1px solid #fff;border-right:2px solid #6a6a6a"></div>
<div class="t" style="left:138px;top:88px;font-size:11px">Surfaces</div>
<div class="a" style="left:186px;top:82px;width:57px;height:22px;background:#f0f0f0;border-top:1px solid #fff;border-left:1px solid #fff;border-right:2px solid #6a6a6a"></div>
<div class="t" style="left:192px;top:86px;font-size:11px">Polygons</div>
<div class="a" style="left:243px;top:84px;width:48px;height:19px;background:#ececec;border-top:1px solid #fff;border-left:1px solid #fff;border-right:2px solid #6a6a6a"></div>
<div class="t" style="left:247px;top:88px;font-size:11px">Subdivs</div>
<div class="a" style="left:291px;top:84px;width:69px;height:19px;background:#ececec;border-top:1px solid #fff;border-left:1px solid #fff;border-right:2px solid #6a6a6a"></div>
<div class="t" style="left:297px;top:88px;font-size:11px">Deformation</div>
<div class="a" style="left:360px;top:84px;width:58px;height:19px;background:#ececec;border-top:1px solid #fff;border-left:1px solid #fff;border-right:2px solid #6a6a6a"></div>
<div class="t" style="left:366px;top:88px;font-size:11px">Animation</div>
<div class="a" style="left:418px;top:84px;width:58px;height:19px;background:#ececec;border-top:1px solid #fff;border-left:1px solid #fff;border-right:2px solid #6a6a6a"></div>
<div class="t" style="left:424px;top:88px;font-size:11px">Dynamics</div>
<div class="a" style="left:476px;top:84px;width:61px;height:19px;background:#ececec;border-top:1px solid #fff;border-left:1px solid #fff;border-right:2px solid #6a6a6a"></div>
<div class="t" style="left:482px;top:88px;font-size:11px">Rendering</div>
<div class="a" style="left:537px;top:84px;width:69px;height:19px;background:#ececec;border-top:1px solid #fff;border-left:1px solid #fff;border-right:2px solid #6a6a6a"></div>
<div class="t" style="left:543px;top:88px;font-size:11px">PaintEffects</div>
<div class="a" style="left:606px;top:84px;width:42px;height:19px;background:#ececec;border-top:1px solid #fff;border-left:1px solid #fff;border-right:2px solid #6a6a6a"></div>
<div class="t" style="left:612px;top:88px;font-size:11px">Cloth</div>
<div class="a" style="left:648px;top:84px;width:41px;height:19px;background:#ececec;border-top:1px solid #fff;border-left:1px solid #fff;border-right:2px solid #6a6a6a"></div>
<div class="t" style="left:654px;top:88px;font-size:11px">Fluids</div>
<div class="a" style="left:690px;top:84px;width:42px;height:19px;background:#ececec;border-top:1px solid #fff;border-left:1px solid #fff;border-right:2px solid #6a6a6a"></div>
<div class="t" style="left:696px;top:88px;font-size:11px">Fur</div>
<div class="a" style="left:732px;top:84px;width:47px;height:19px;background:#ececec;border-top:1px solid #fff;border-left:1px solid #fff;border-right:2px solid #6a6a6a"></div>
<div class="t" style="left:738px;top:88px;font-size:11px">Custom</div>
<div class="a" style="left:36px;top:101px;width:1881px;height:1px;background:#fff"></div>
<div class="a" style="left:36px;top:101px;width:1px;height:44px;background:#fff"></div>
<div class="a" style="left:40px;top:103px;width:1877px;height:1px;background:#696969"></div>
<div class="a" style="left:40px;top:103px;width:1px;height:40px;background:#696969"></div>
<div class="a" style="left:41px;top:104px;width:1876px;height:1px;background:#a8a8a8"></div>
<div class="a" style="left:41px;top:104px;width:1px;height:38px;background:#a8a8a8"></div>
<div class="a" style="left:42px;top:105px;width:1875px;height:1px;background:#696969"></div>
<div class="a" style="left:42px;top:105px;width:1px;height:36px;background:#696969"></div>
<div class="a" style="left:43px;top:106px;width:1874px;height:1px;background:#fff"></div>
<div class="a" style="left:41px;top:141px;width:1876px;height:1px;background:#fff"></div>
<div class="a" style="left:40px;top:142px;width:1877px;height:1px;background:#696969"></div>
<div class="a" style="left:36px;top:145px;width:1881px;height:2px;background:#6a6a6a"></div>
<svg class="a" style="left:1898px;top:110px" width="12" height="30" viewBox="0 0 12 30"><path d="M1 6l5-4 5 4" fill="none" stroke="#999" stroke-width="1.3"/><path d="M1 20l5 4 5-4" fill="none" stroke="#999" stroke-width="1.3"/></svg>
<div class="a" style="left:1895px;top:106px;width:1px;height:34px;background:#fff"></div>
<div class="a" style="left:12px;top:108px;width:23px;height:38px;border-top:2px solid #a0a0a0;border-left:2px solid #a0a0a0;background:#f0f0f0"></div>
<div class="a" style="left:15px;top:112px;width:18px;height:14px;background:#f0f0f0;border-bottom:1px solid #fff"></div>
<div class="a" style="left:18px;top:115px;width:10px;height:8px;background:#dde2e8"></div>
<div class="a" style="left:29px;top:115px;width:1px;height:8px;background:#000"></div>
<svg class="a" style="left:18px;top:132px" width="14" height="6" viewBox="0 0 14 6"><path d="M0 0h14L7 6z" fill="#000"/></svg>
<div class="a" style="left:13px;top:127px;width:20px;height:1px;background:#cfcfcf"></div>
<svg class="a" style="left:3px;top:149px" width="36" height="8" viewBox="0 0 36 8"><path d="M0 0L4 3.5L0 7z" fill="#333"/><rect x="8" y="1" width="1" height="1" fill="#555"/><rect x="8" y="5" width="1" height="1" fill="#555"/><rect x="10" y="1" width="1" height="1" fill="#555"/><rect x="10" y="5" width="1" height="1" fill="#555"/><rect x="12" y="1" width="1" height="1" fill="#555"/><rect x="12" y="5" width="1" height="1" fill="#555"/><rect x="14" y="1" width="1" height="1" fill="#555"/><rect x="14" y="5" width="1" height="1" fill="#555"/><rect x="16" y="1" width="1" height="1" fill="#555"/><rect x="16" y="5" width="1" height="1" fill="#555"/><rect x="18" y="1" width="1" height="1" fill="#555"/><rect x="18" y="5" width="1" height="1" fill="#555"/><rect x="20" y="1" width="1" height="1" fill="#555"/><rect x="20" y="5" width="1" height="1" fill="#555"/><rect x="22" y="1" width="1" height="1" fill="#555"/><rect x="22" y="5" width="1" height="1" fill="#555"/><rect x="24" y="1" width="1" height="1" fill="#555"/><rect x="24" y="5" width="1" height="1" fill="#555"/><rect x="26" y="1" width="1" height="1" fill="#555"/><rect x="26" y="5" width="1" height="1" fill="#555"/><rect x="28" y="1" width="1" height="1" fill="#555"/><rect x="28" y="5" width="1" height="1" fill="#555"/><rect x="30" y="1" width="1" height="1" fill="#555"/><rect x="30" y="5" width="1" height="1" fill="#555"/><rect x="32" y="1" width="1" height="1" fill="#555"/><rect x="32" y="5" width="1" height="1" fill="#555"/><rect x="34" y="1" width="1" height="1" fill="#555"/><rect x="34" y="5" width="1" height="1" fill="#555"/></svg>
<svg class="a" style="left:44px;top:107px" width="32" height="32" viewBox="0 0 32 32"><rect width="32" height="32" fill="#c0c0c0"/><ellipse cx="10" cy="24" rx="7" ry="4" fill="#7a7a7a"/><polygon points="8,12 13,6 19,6 25,11 26,18 22,25 15,27 9,24 6,18" fill="#1a8cff" stroke="#0a1a8c" stroke-width="1.2" stroke-linejoin="round"/><path d="M13 6l3 6 3-6M8 12h17M6 18l4 0 12 0 4 0M16 12v15M10 12l0 12M22 12v13" fill="none" stroke="#0a1a8c" stroke-width="1.2"/></svg>
<svg class="a" style="left:78px;top:107px" width="32" height="32" viewBox="0 0 32 32"><rect width="32" height="32" fill="#c0c0c0"/><path d="M3 22l8-4v6z" fill="#7a7a7a"/><polygon points="6,9 19,5 27,9 27,22 14,27 6,22" fill="#0a5ad0" stroke="#0a1a8c" stroke-width="1.2" stroke-linejoin="round"/><polygon points="6,9 19,5 27,9 14,13" fill="#5ab4ff" stroke="#0a1a8c" stroke-width="1.2" stroke-linejoin="round"/><path d="M14 13v14" fill="none" stroke="#0a1a8c" stroke-width="1.2"/></svg>
<svg class="a" style="left:112px;top:107px" width="32" height="32" viewBox="0 0 32 32"><rect width="32" height="32" fill="#c0c0c0"/><path d="M3 22l8-5v8z" fill="#7a7a7a"/><polygon points="8,8 26,8 26,24 17,27 8,24" fill="#0a5ad0" stroke="#0a1a8c" stroke-width="1.2" stroke-linejoin="round"/><ellipse cx="17" cy="8" rx="9" ry="3.5" fill="#5ab4ff" stroke="#0a1a8c" stroke-width="1.2"/><path d="M13 11v15M21 11v15" fill="none" stroke="#0a1a8c" stroke-width="1.2"/></svg>
<svg class="a" style="left:146px;top:107px" width="32" height="32" viewBox="0 0 32 32"><rect width="32" height="32" fill="#c0c0c0"/><path d="M3 17l10 6-3 3z" fill="#7a7a7a"/><polygon points="16,3 24,24 17,27 9,24" fill="#1a8cff" stroke="#0a1a8c" stroke-width="1.2" stroke-linejoin="round"/><path d="M16 3l-2 24M16 3l4 23" fill="none" stroke="#0a1a8c" stroke-width="1.2"/></svg>
<svg class="a" style="left:180px;top:107px" width="32" height="32" viewBox="0 0 32 32"><rect width="32" height="32" fill="#c0c0c0"/><path d="M5 19l16 8 8-8z" fill="#7a7a7a"/><polygon points="4,17 15,9 28,14 18,24" fill="#1a8cff" stroke="#0a1a8c" stroke-width="1.2" stroke-linejoin="round"/><path d="M8 14l13 5M11 11l14 6M8 20l11-8M12 22l11-8" fill="none" stroke="#0a1a8c" stroke-width="1.2"/></svg>
<svg class="a" style="left:214px;top:107px" width="32" height="32" viewBox="0 0 32 32"><rect width="32" height="32" fill="#c0c0c0"/><path d="M3 18l10 8 0-6z" fill="#7a7a7a"/><polygon points="5,13 11,7 22,7 28,13 27,20 21,25 11,25 5,20" fill="#1a8cff" stroke="#0a1a8c" stroke-width="1.2" stroke-linejoin="round"/><ellipse cx="16" cy="15" rx="4.5" ry="2.5" fill="#9ab" stroke="#0a1a8c"/><path d="M5 13l7 2M28 13l-7 2M11 7l3 5M22 7l-3 5M11 25l2-7M21 25l-2-7" fill="none" stroke="#0a1a8c" stroke-width="1.2"/></svg>
<svg class="a" style="left:248px;top:107px" width="32" height="32" viewBox="0 0 32 32"><rect width="32" height="32" fill="#c0c0c0"/><circle cx="16" cy="16" r="13.5" fill="none" stroke="#000" stroke-width="1.5"/><polygon points="14,4 23,7 19,15 11,12" fill="#1a8cff" stroke="#0a1a8c" stroke-width="1.2" stroke-linejoin="round"/><polygon points="9,16 17,13 24,21 14,26" fill="#1a8cff" stroke="#0a1a8c" stroke-width="1.2" stroke-linejoin="round"/><path d="M18 5l-3 9M13 19l7-3" fill="none" stroke="#0a1a8c" stroke-width="1.2"/></svg>
<svg class="a" style="left:282px;top:107px" width="32" height="32" viewBox="0 0 32 32"><rect width="32" height="32" fill="#c0c0c0"/><polygon points="9,5 17,5 17,12 9,12" fill="#1a8cff" stroke="#0a1a8c" stroke-width="2" stroke-linejoin="round"/><polygon points="5,9 13,9 13,16 5,16" fill="#1a8cff" stroke="#0a1a8c" stroke-width="2" stroke-linejoin="round"/><polygon points="20,12 28,12 28,19 20,19" fill="#1a8cff" stroke="#0a1a8c" stroke-width="2" stroke-linejoin="round"/><polygon points="15,19 22,19 22,26 15,26" fill="#1a8cff" stroke="#0a1a8c" stroke-width="2" stroke-linejoin="round"/><path d="M3 21l9 7" stroke="#e00" stroke-width="3"/><path d="M8 29l6 0-2-6z" fill="#e00"/></svg>
<svg class="a" style="left:316px;top:107px" width="32" height="32" viewBox="0 0 32 32"><rect width="32" height="32" fill="#c0c0c0"/><path d="M3 21l9 7" stroke="#e00" stroke-width="3"/><path d="M8 29l6 0-2-6z" fill="#e00"/><path d="M4 14a6 6 0 0 1 6-9v11z" fill="#0a0" stroke="#050"/><polygon points="14,15 20,12 27,13 29,19 25,25 17,26 13,21" fill="#1a8cff" stroke="#0a1a8c" stroke-width="1.2" stroke-linejoin="round"/><path d="M21 12v14M13 19h16" fill="none" stroke="#0a1a8c" stroke-width="1.2"/></svg>
<svg class="a" style="left:350px;top:107px" width="32" height="32" viewBox="0 0 32 32"><rect width="32" height="32" fill="#c0c0c0"/><path d="M3 21l9 7" stroke="#e00" stroke-width="3"/><path d="M8 29l6 0-2-6z" fill="#e00"/><polygon points="5,3 15,3 16,12 6,13" fill="#8ab8e8" stroke="#2a5ab8" stroke-width="1.2" stroke-linejoin="round"/><polygon points="15,17 22,14 28,17 29,24 24,28 16,27 13,22" fill="#0a3ab0" stroke="#0a1a8c" stroke-width="1.2" stroke-linejoin="round"/></svg>
<svg class="a" style="left:384px;top:107px" width="32" height="32" viewBox="0 0 32 32"><rect width="32" height="32" fill="#c0c0c0"/><path d="M6 8l16-4 6 7-2 15-16 2-4-8zM6 8l6 8 14-4" fill="none" stroke="#1a2ae0" stroke-width="1"/><circle cx="15" cy="17" r="6" fill="#0a3ab0" stroke="#0a1a8c"/></svg>
<svg class="a" style="left:418px;top:107px" width="32" height="32" viewBox="0 0 32 32"><rect width="32" height="32" fill="#c0c0c0"/><polygon points="4,10 18,4 24,9 10,15" fill="#8ab8e8" stroke="#3a5ab8" stroke-width="1.2" stroke-linejoin="round"/><path d="M4 25l10 5 8-3z" fill="#7a7a7a"/><polygon points="4,18 17,11 28,22 14,28" fill="#1a8cff" stroke="#0a1a8c" stroke-width="1.2" stroke-linejoin="round"/><path d="M17 11l-3 17" fill="none" stroke="#0a1a8c" stroke-width="1.2"/></svg>
<svg class="a" style="left:452px;top:107px" width="32" height="32" viewBox="0 0 32 32"><rect width="32" height="32" fill="#c0c0c0"/><polygon points="4,8 14,6 20,25 10,26" fill="#1a8cff" stroke="#0a1a8c" stroke-width="1.2" stroke-linejoin="round"/><polygon points="13,6 21,4 26,22 19,25" fill="#20c0ff" stroke="#e01010" stroke-width="1.5" stroke-linejoin="round"/><path d="M13 6l5 5 4-4M18 11v9" fill="none" stroke="#000" stroke-width="1.5"/><path d="M19 21l6 9 1-4 4 0z" fill="#c00" stroke="#800" stroke-width="0.6"/></svg>
<svg class="a" style="left:486px;top:107px" width="32" height="32" viewBox="0 0 32 32"><rect width="32" height="32" fill="#c0c0c0"/><polygon points="3,16 14,9 18,21 8,27" fill="#1a8cff" stroke="#0a1a8c" stroke-width="1.2" stroke-linejoin="round"/><polygon points="14,9 21,5 24,19 15,23" fill="#0a2a60" stroke="#0a1a8c" stroke-width="1.2" stroke-linejoin="round"/><polygon points="14,9 21,5 27,9 21,13" fill="#90e8c0" stroke="#0a1a8c" stroke-width="1.2" stroke-linejoin="round"/><polygon points="21,13 27,9 26,21 20,25" fill="#1a8cff" stroke="#0a1a8c" stroke-width="1.2" stroke-linejoin="round"/><path d="M5 21l10-5" fill="none" stroke="#0a1a8c" stroke-width="1.2"/></svg>
<svg class="a" style="left:520px;top:107px" width="32" height="32" viewBox="0 0 32 32"><rect width="32" height="32" fill="#c0c0c0"/><polygon points="3,16 14,9 18,21 8,27" fill="#1a8cff" stroke="#0a1a8c" stroke-width="1.2" stroke-linejoin="round"/><polygon points="14,7 19,4 26,21 21,24" fill="#0a2a60" stroke="#0a1a8c" stroke-width="1.2" stroke-linejoin="round"/><polygon points="16,14 27,9 28,22 20,25" fill="#1a8cff" stroke="#0a1a8c" stroke-width="1.2" stroke-linejoin="round"/><path d="M5 21l10-5" fill="none" stroke="#0a1a8c" stroke-width="1.2"/></svg>
<svg class="a" style="left:554px;top:107px" width="32" height="32" viewBox="0 0 32 32"><rect width="32" height="32" fill="#c0c0c0"/><path d="M2 4l14 4M2 4l10 14M2 4l14 12" fill="none" stroke="#0a1a8c" stroke-width="1.2"/><polygon points="14,10 22,6 30,10 28,24 20,28 12,22" fill="#0a4ab0" stroke="#0a1a8c" stroke-width="1.2" stroke-linejoin="round"/><polygon points="14,10 22,6 30,10 22,14" fill="#5ab4ff" stroke="#0a1a8c" stroke-width="1.2" stroke-linejoin="round"/></svg>
<svg class="a" style="left:588px;top:107px" width="32" height="32" viewBox="0 0 32 32"><path d="M2 22l10-6 2 10z" fill="#7a7a7a"/><polygon points="6,22 14,9 26,12 24,27 14,30" fill="#0a3aa0" stroke="#0a1a8c" stroke-width="1.2" stroke-linejoin="round"/><polygon points="14,9 18,4 28,7 26,12" fill="#30a8ff" stroke="#0a1a8c" stroke-width="1.2" stroke-linejoin="round"/><path d="M14 9l-1 21" fill="none" stroke="#4af" stroke-width="0.8"/></svg>
<svg class="a" style="left:622px;top:107px" width="32" height="32" viewBox="0 0 32 32"><rect width="32" height="32" fill="#c0c0c0"/><polygon points="5,7 18,4 22,12 9,15" fill="#8ab8e8" stroke="#3a5ab8" stroke-width="1.2" stroke-linejoin="round"/><polygon points="2,17 13,13 17,27 7,30" fill="#1a8cff" stroke="#0a1a8c" stroke-width="1.2" stroke-linejoin="round"/><polygon points="14,12 24,9 28,23 18,26" fill="#1a8cff" stroke="#0a1a8c" stroke-width="1.2" stroke-linejoin="round"/></svg>
<svg class="a" style="left:656px;top:107px" width="32" height="32" viewBox="0 0 32 32"><rect width="32" height="32" fill="#c0c0c0"/><polygon points="5,5 20,4 22,13 7,15" fill="#8ab8e8" stroke="#9040c0" stroke-width="1.2" stroke-linejoin="round"/><path d="M10 9l0 0M15 8l0 0" stroke="#ff0" stroke-width="2.5"/><polygon points="5,16 20,13 24,25 9,29" fill="#1a8cff" stroke="#1a1a9c" stroke-width="1.2" stroke-linejoin="round"/><path d="M11 17l0 0M16 16l0 0M18 26l0 0" stroke="#ff0" stroke-width="2.5" stroke-linecap="square"/><path d="M13 15l-2 13M7 21l15-3" fill="none" stroke="#0a1a8c" stroke-width="1.2"/></svg>
<svg class="a" style="left:690px;top:107px" width="32" height="32" viewBox="0 0 32 32"><rect width="32" height="32" fill="#c0c0c0"/><polygon points="4,4 11,3 14,10 6,11" fill="#8ab8e8" stroke="#3a5ab8" stroke-width="1.2" stroke-linejoin="round"/><polygon points="13,3 21,2 23,9 15,10" fill="#8ab8e8" stroke="#3a5ab8" stroke-width="1.2" stroke-linejoin="round"/><path d="M11 6l2 4M17 6l-2 4" stroke="#c00" stroke-width="2"/><polygon points="4,14 22,11 28,24 10,28" fill="#1a8cff" stroke="#0a1a8c" stroke-width="1.2" stroke-linejoin="round"/><path d="M16 17l2 8" stroke="#ff0" stroke-width="2.5"/><path d="M5 20l18-3" fill="none" stroke="#0a1a8c" stroke-width="1.2"/></svg>
<svg class="a" style="left:724px;top:107px" width="32" height="32" viewBox="0 0 32 32"><rect width="32" height="32" fill="#c0c0c0"/><polygon points="3,6 19,3 24,9 8,13" fill="#8ab8e8" stroke="#3a5ab8" stroke-width="1.2" stroke-linejoin="round"/><path d="M3 6l21 3" fill="none" stroke="#3a5ab8" stroke-width="0.8"/><polygon points="4,14 20,11 30,24 13,29" fill="#1a8cff" stroke="#0a1a8c" stroke-width="1.2" stroke-linejoin="round"/><path d="M20 11l-7 18" fill="none" stroke="#0a1a8c" stroke-width="1.2"/></svg>
<svg class="a" style="left:758px;top:107px" width="32" height="32" viewBox="0 0 32 32"><rect width="32" height="32" fill="#c0c0c0"/><polygon points="4,2 17,2 17,9 4,9" fill="#8ab8e8" stroke="#2a5ae0" stroke-width="1.2" stroke-linejoin="round"/><polygon points="8,13 18,10 26,21 17,28" fill="#1a8cff" stroke="#0a1a8c" stroke-width="1.2" stroke-linejoin="round"/><path d="M8 13l10 4 8 4M18 10v7l-1 11" fill="none" stroke="#0a1a8c" stroke-width="1.2"/></svg>
<svg class="a" style="left:792px;top:107px" width="32" height="32" viewBox="0 0 32 32"><rect width="32" height="32" fill="#c0c0c0"/><polygon points="3,9 15,5 18,16 6,20" fill="#1a8cff" stroke="#0a1a8c" stroke-width="1.2" stroke-linejoin="round"/><path d="M9 7l3 11M4 14l12-4" fill="none" stroke="#0a1a8c" stroke-width="1.2"/><polygon points="17,17 25,14 28,22 20,25" fill="#1a8cff" stroke="#0a1a8c" stroke-width="1.2" stroke-linejoin="round"/></svg>
<svg class="a" style="left:826px;top:107px" width="32" height="32" viewBox="0 0 32 32"><rect width="32" height="32" fill="#c0c0c0"/><polygon points="2,22 14,15 30,22 18,30" fill="#20a0ff" stroke="#0a6ae0" stroke-width="1.2" stroke-linejoin="round"/><path d="M6 24l10-6 6 8M10 27l8-4" fill="none" stroke="#0a6ae0" stroke-width="0.8"/><polygon points="11,18 16,9 21,18" fill="#60c0ff" stroke="#0a1a8c" stroke-width="1.2" stroke-linejoin="round"/><ellipse cx="16" cy="17" rx="7" ry="4" fill="none" stroke="#c01010" stroke-width="2"/><path d="M16 13V3" stroke="#c01010" stroke-width="2"/><path d="M12 5l4-4 4 4z" fill="#c01010"/></svg>
<svg class="a" style="left:860px;top:107px" width="32" height="32" viewBox="0 0 32 32"><rect width="32" height="32" fill="#c0c0c0"/><path d="M6 3l12 4v19l-12-4z" fill="#fff" stroke="#000"/><rect x="6.0" y="4.0" width="3.0" height="3.8" fill="#000"/><rect x="6.0" y="11.6" width="3.0" height="3.8" fill="#000"/><rect x="6.0" y="19.2" width="3.0" height="3.8" fill="#000"/><rect x="9.0" y="9.0" width="3.0" height="3.8" fill="#000"/><rect x="9.0" y="16.6" width="3.0" height="3.8" fill="#000"/><rect x="12.0" y="6.4" width="3.0" height="3.8" fill="#000"/><rect x="12.0" y="14.0" width="3.0" height="3.8" fill="#000"/><rect x="12.0" y="21.6" width="3.0" height="3.8" fill="#000"/><rect x="15.0" y="11.4" width="3.0" height="3.8" fill="#000"/><rect x="15.0" y="19.0" width="3.0" height="3.8" fill="#000"/><path d="M19 18l6-5" stroke="#0a0" stroke-width="3"/><path d="M22 9l7 1-3 6z" fill="#0a0"/><path d="M3 25l8-2M7 24v6" stroke="#0b0" stroke-width="3"/></svg>
<svg class="a" style="left:894px;top:107px" width="32" height="32" viewBox="0 0 32 32"><rect width="32" height="32" fill="#c0c0c0"/><path d="M6 4c4 2 10 2 14 4v18c-4-2-10-3-14-4z" fill="#fff" stroke="#000"/><rect x="7.0" y="5.0" width="3.0" height="3.8" fill="#000"/><rect x="7.0" y="12.6" width="3.0" height="3.8" fill="#000"/><rect x="7.0" y="20.2" width="3.0" height="3.8" fill="#000"/><rect x="10.0" y="10.0" width="3.0" height="3.8" fill="#000"/><rect x="10.0" y="17.6" width="3.0" height="3.8" fill="#000"/><rect x="13.0" y="7.4" width="3.0" height="3.8" fill="#000"/><rect x="13.0" y="15.0" width="3.0" height="3.8" fill="#000"/><rect x="13.0" y="22.6" width="3.0" height="3.8" fill="#000"/><rect x="16.0" y="12.4" width="3.0" height="3.8" fill="#000"/><rect x="16.0" y="20.0" width="3.0" height="3.8" fill="#000"/><path d="M19 18l6-5" stroke="#0a0" stroke-width="3"/><path d="M22 9l7 1-3 6z" fill="#0a0"/><path d="M14 26l9-3M19 24v6" stroke="#0b0" stroke-width="3"/></svg>
<svg class="a" style="left:928px;top:107px" width="32" height="32" viewBox="0 0 32 32"><rect width="32" height="32" fill="#c0c0c0"/><path d="M4 10c2-6 10-8 16-5 1 8 0 16-6 20-6-2-10-8-10-15z" fill="#fff" stroke="#000"/><rect x="5.0" y="6.0" width="3.5" height="3.6" fill="#000"/><rect x="5.0" y="13.2" width="3.5" height="3.6" fill="#000"/><rect x="5.0" y="20.4" width="3.5" height="3.6" fill="#000"/><rect x="8.5" y="10.8" width="3.5" height="3.6" fill="#000"/><rect x="8.5" y="18.0" width="3.5" height="3.6" fill="#000"/><rect x="12.0" y="8.4" width="3.5" height="3.6" fill="#000"/><rect x="12.0" y="15.6" width="3.5" height="3.6" fill="#000"/><rect x="12.0" y="22.8" width="3.5" height="3.6" fill="#000"/><rect x="15.5" y="13.2" width="3.5" height="3.6" fill="#000"/><rect x="15.5" y="20.4" width="3.5" height="3.6" fill="#000"/><path d="M19 18l6-5" stroke="#0a0" stroke-width="3"/><path d="M22 9l7 1-3 6z" fill="#0a0"/></svg>
<svg class="a" style="left:962px;top:107px" width="32" height="32" viewBox="0 0 32 32"><rect width="32" height="32" fill="#c0c0c0"/><path d="M2 6l14-4 14 4v14l-14 10-14-10z" fill="#fff" stroke="#000"/><rect x="3.0" y="5.0" width="4.3" height="3.1" fill="#000"/><rect x="3.0" y="11.3" width="4.3" height="3.1" fill="#000"/><rect x="3.0" y="17.6" width="4.3" height="3.1" fill="#000"/><rect x="3.0" y="23.9" width="4.3" height="3.1" fill="#000"/><rect x="7.3" y="9.3" width="4.3" height="3.1" fill="#000"/><rect x="7.3" y="15.6" width="4.3" height="3.1" fill="#000"/><rect x="7.3" y="21.9" width="4.3" height="3.1" fill="#000"/><rect x="11.7" y="7.4" width="4.3" height="3.1" fill="#000"/><rect x="11.7" y="13.7" width="4.3" height="3.1" fill="#000"/><rect x="11.7" y="20.0" width="4.3" height="3.1" fill="#000"/><rect x="11.7" y="26.3" width="4.3" height="3.1" fill="#000"/><rect x="16.0" y="11.7" width="4.3" height="3.1" fill="#000"/><rect x="16.0" y="18.0" width="4.3" height="3.1" fill="#000"/><rect x="16.0" y="24.3" width="4.3" height="3.1" fill="#000"/><rect x="20.3" y="9.8" width="4.3" height="3.1" fill="#000"/><rect x="20.3" y="16.1" width="4.3" height="3.1" fill="#000"/><rect x="20.3" y="22.4" width="4.3" height="3.1" fill="#000"/><rect x="20.3" y="28.7" width="4.3" height="3.1" fill="#000"/><rect x="24.7" y="14.1" width="4.3" height="3.1" fill="#000"/><rect x="24.7" y="20.4" width="4.3" height="3.1" fill="#000"/><rect x="24.7" y="26.7" width="4.3" height="3.1" fill="#000"/><path d="M10 10h12M16 10v12" stroke="#0c0" stroke-width="3.5"/></svg>
<svg class="a" style="left:996px;top:107px" width="32" height="32" viewBox="0 0 32 32"><rect width="32" height="32" fill="#c0c0c0"/><rect x="1" y="1" width="30" height="30" fill="#000"/><rect x="3" y="3" width="26" height="26" fill="#c8c8c8"/><rect x="3" y="3" width="26" height="3" fill="#3a7ae0"/><path d="M10 11l9 3v13l-9-3z" fill="#fff" stroke="#000"/><rect x="10.0" y="11.0" width="3.0" height="3.2" fill="#000"/><rect x="10.0" y="17.5" width="3.0" height="3.2" fill="#000"/><rect x="13.0" y="15.4" width="3.0" height="3.2" fill="#000"/><rect x="13.0" y="21.9" width="3.0" height="3.2" fill="#000"/><rect x="16.0" y="13.4" width="3.0" height="3.2" fill="#000"/><rect x="16.0" y="19.9" width="3.0" height="3.2" fill="#000"/><path d="M20 20l5-4" stroke="#0a0" stroke-width="2"/><path d="M8 24l3 6" stroke="#0a0" stroke-width="2"/></svg>
<div class="a" style="left:4px;top:158px;width:32px;height:32px;background:#c0c0c0"></div>
<svg class="a" style="left:4px;top:158px" width="32" height="32" viewBox="0 0 32 32"><path d="M9 6l0 18 5-5 5 8 3-2-5-7 7 0z" fill="#8b0000" stroke="#fff" stroke-width="1"/></svg>
<div class="a" style="left:4px;top:192px;width:32px;height:32px;background:#c0c0c0"></div>
<svg class="a" style="left:4px;top:192px" width="32" height="32" viewBox="0 0 32 32"><path d="M17 19c5-4 4-13-4-14S2 10 3 16s6 7 8 6c1 0 2 2 2 3" fill="none" stroke="#e00" stroke-width="1.3" stroke-dasharray="2.2 1.4"/><path d="M19 15l0 14 3-3 3 5 2-1-3-5 5 0z" fill="#8b0000" stroke="#fff" stroke-width="0.8"/></svg>
<div class="a" style="left:3px;top:226px;width:34px;height:33px;background:#c0c0c0;border:2px solid #000080"></div>
<svg class="a" style="left:5px;top:228px" width="30" height="30" viewBox="0 0 30 30"><path d="M4 16l5-12 4 12z" fill="#ddd"/><path d="M8 16l5-12 4 12z" fill="#ccc"/><path d="M13 17l7-14 7 14c-2 3-12 3-14 0z" fill="#1a7ad8"/><path d="M4 18l17 6" stroke="#e00" stroke-width="2.5"/><path d="M18 20l8 5-8 3z" fill="#e00"/></svg>
<div class="a" style="left:4px;top:260px;width:32px;height:32px;background:#c0c0c0"></div>
<svg class="a" style="left:4px;top:260px" width="32" height="32" viewBox="0 0 32 32"><circle cx="16" cy="11" r="7" fill="#1a7ad8"/><circle cx="14" cy="8" r="2.5" fill="#8fd0ff"/><path d="M4 14c-3 8 8 13 18 12" fill="none" stroke="#e00" stroke-width="3"/><path d="M24 14c5 3 2 9-6 11" fill="none" stroke="#e00" stroke-width="3"/><path d="M17 21l6 5-7 3z" fill="#e00"/></svg>
<div class="a" style="left:4px;top:294px;width:32px;height:32px;background:#c0c0c0"></div>
<svg class="a" style="left:4px;top:294px" width="32" height="32" viewBox="0 0 32 32"><path d="M2 9l8-4 10 3v12l-9 5-9-4z" fill="#999" opacity="0.45"/><path d="M7 11l9-3 8 3v10l-9 4-8-3z" fill="#1a78d8"/><path d="M7 11l9-3 8 3-8 3z" fill="#5ab0f0"/><path d="M16 14v11" stroke="#0a4aa0" stroke-width="0.8"/><path d="M24 14l4 5" stroke="#e00" stroke-width="2.5"/><path d="M25 21l4 1 0-4z" fill="#e00"/><path d="M6 28l14-3" stroke="#e00" stroke-width="2.5"/><path d="M19 22l6 2-5 4z" fill="#e00"/></svg>
<div class="a" style="left:4px;top:328px;width:32px;height:32px;background:#c0c0c0"></div>
<svg class="a" style="left:4px;top:328px" width="32" height="32" viewBox="0 0 32 32"><path d="M0 32L32 0V32z" fill="#9a9a90"/><path d="M0 32L32 0" stroke="#000" stroke-width="1.5"/><circle cx="9" cy="8" r="4" fill="#1a7ad8"/><path d="M20 22V12" stroke="#0b0" stroke-width="2.5"/><path d="M17 14l3-5 3 5z" fill="#0b0"/><path d="M20 22H10" stroke="#00d" stroke-width="2.5"/><path d="M12 19l-5 3 5 3z" fill="#00d"/><path d="M20 22l6 4" stroke="#e00" stroke-width="3"/><circle cx="25" cy="26" r="3" fill="#e00"/></svg>
<div class="a" style="left:3px;top:397px;width:35px;height:1px;background:#fff"></div>
<div class="a" style="left:3px;top:402px;width:35px;height:1px;background:#a0a0a0"></div>
<svg class="a" style="left:4px;top:405px" width="32" height="32" viewBox="0 0 32 32"><rect x="0.5" y="0.5" width="31" height="31" fill="#c8c8c8" stroke="#000" stroke-width="1"/><path d="M8.0 14.0L19.0 7.4L30.0 14.0L19.0 20.6Z M13.5 10.7L24.5 17.3 M13.5 17.3L24.5 10.7" fill="none" stroke="#000" stroke-width="1"/><path d="M10.0 27.0v-6.0" stroke="#0a0" stroke-width="1.5"/><path d="M10.0 27.0l-4.8 3.0" stroke="#00f" stroke-width="1.5"/><path d="M10.0 27.0l4.8 3.0" stroke="#e00" stroke-width="1.5"/></svg>
<svg class="a" style="left:4px;top:438px" width="32" height="33" viewBox="0 0 32 33"><rect x="0.5" y="0.5" width="15" height="15" fill="#c8c8c8" stroke="#000" stroke-width="1"/><path d="M8 3v10M3 8h10" stroke="#000" stroke-width="1.3"/><rect x="16.5" y="0.5" width="15" height="15" fill="#c8c8c8" stroke="#000" stroke-width="1"/><path d="M19.0 7.0L25.0 3.4L31.0 7.0L25.0 10.6Z M22.0 5.2L28.0 8.8 M22.0 8.8L28.0 5.2" fill="none" stroke="#000" stroke-width="1"/><path d="M19.0 14.0v-3.0" stroke="#0a0" stroke-width="1.5"/><path d="M19.0 14.0l-2.4 1.5" stroke="#00f" stroke-width="1.5"/><path d="M19.0 14.0l2.4 1.5" stroke="#e00" stroke-width="1.5"/><rect x="0.5" y="16.5" width="15" height="15" fill="#c8c8c8" stroke="#000" stroke-width="1"/><path d="M8 19v10M3 24h10" stroke="#000" stroke-width="1.3"/><rect x="16.5" y="16.5" width="15" height="15" fill="#c8c8c8" stroke="#000" stroke-width="1"/><path d="M24 19v10M19 24h10" stroke="#000" stroke-width="1.3"/></svg>
<svg class="a" style="left:4px;top:472px" width="32" height="33" viewBox="0 0 32 33"><rect x="0.5" y="0.5" width="14" height="32" fill="#fff" stroke="#000" stroke-width="1"/><path d="M3 5h5M3 8h7M3 11h6M3 14h8M3 17h5M3 20h6M3 23h7" stroke="#333" stroke-width="0.8"/><path d="M2 8h1M2 11h1M2 14h1M2 17h1M2 20h1M2 23h1" stroke="#36c" stroke-width="0.8"/><rect x="15.5" y="0.5" width="16" height="32" fill="#c8c8c8" stroke="#000" stroke-width="1"/><path d="M18.0 14.0L24.0 10.4L30.0 14.0L24.0 17.6Z M21.0 12.2L27.0 15.8 M21.0 15.8L27.0 12.2" fill="none" stroke="#000" stroke-width="1"/><path d="M19.0 28.0v-4.0" stroke="#0a0" stroke-width="1.5"/><path d="M19.0 28.0l-3.2 2.0" stroke="#00f" stroke-width="1.5"/><path d="M19.0 28.0l3.2 2.0" stroke="#e00" stroke-width="1.5"/></svg>
<svg class="a" style="left:4px;top:506px" width="32" height="33" viewBox="0 0 32 33"><rect x="0.5" y="0.5" width="31" height="15" fill="#c8c8c8" stroke="#000" stroke-width="1"/><path d="M5.0 8.0L16.0 1.4L27.0 8.0L16.0 14.6Z M10.5 4.7L21.5 11.3 M10.5 11.3L21.5 4.7" fill="none" stroke="#000" stroke-width="1"/><path d="M5.0 15.0v-4.0" stroke="#0a0" stroke-width="1.5"/><path d="M5.0 15.0l-3.2 2.0" stroke="#00f" stroke-width="1.5"/><path d="M5.0 15.0l3.2 2.0" stroke="#e00" stroke-width="1.5"/><rect x="0.5" y="16.5" width="31" height="16" fill="#c8c8c8" stroke="#000" stroke-width="1"/><rect x="2" y="18" width="4" height="13" fill="#fff"/><path d="M10 17v15" stroke="#e00" stroke-width="1.5"/><path d="M6 26c4-8 6-8 10 0s6 2 10-2" fill="none" stroke="#36c" stroke-width="1.2"/><path d="M6 29h24" stroke="#000"/></svg>
<svg class="a" style="left:4px;top:540px" width="32" height="33" viewBox="0 0 32 33"><rect x="0.5" y="0.5" width="31" height="15" fill="#111" stroke="#000" stroke-width="1"/><rect x="3" y="4" width="4" height="4" fill="none" stroke="#888"/><rect x="3" y="10" width="4" height="4" fill="none" stroke="#888"/><rect x="13" y="4" width="4" height="4" fill="none" stroke="#f9c"/><rect x="13" y="10" width="4" height="4" fill="none" stroke="#f9c"/><rect x="23" y="7" width="4" height="4" fill="none" stroke="#6f6"/><path d="M7 6h6M7 12h6M17 6l6 3M17 12l6-3" stroke="#6cf"/><rect x="0.5" y="16.5" width="31" height="16" fill="#c8c8c8" stroke="#000" stroke-width="1"/><path d="M5.0 24.0L16.0 17.4L27.0 24.0L16.0 30.6Z M10.5 20.7L21.5 27.3 M10.5 27.3L21.5 20.7" fill="none" stroke="#000" stroke-width="1"/><path d="M5.0 31.0v-4.0" stroke="#0a0" stroke-width="1.5"/><path d="M5.0 31.0l-3.2 2.0" stroke="#00f" stroke-width="1.5"/><path d="M5.0 31.0l3.2 2.0" stroke="#e00" stroke-width="1.5"/></svg>
<svg class="a" style="left:4px;top:574px" width="32" height="33" viewBox="0 0 32 33"><rect x="0.5" y="0.5" width="14" height="15" fill="#c8c8c8" stroke="#000" stroke-width="1"/><path d="M2.0 7.0L8.0 3.4L14.0 7.0L8.0 10.6Z M5.0 5.2L11.0 8.8 M5.0 8.8L11.0 5.2" fill="none" stroke="#000" stroke-width="1"/><path d="M3.0 14.0v-3.0" stroke="#0a0" stroke-width="1.5"/><path d="M3.0 14.0l-2.4 1.5" stroke="#00f" stroke-width="1.5"/><path d="M3.0 14.0l2.4 1.5" stroke="#e00" stroke-width="1.5"/><rect x="15.5" y="0.5" width="16" height="15" fill="#111" stroke="#000" stroke-width="1"/><path d="M19 4h5M19 7h8M21 10h5M23 13h5" stroke="#ff0" stroke-width="1.8"/><rect x="0.5" y="16.5" width="31" height="16" fill="#c8c8c8" stroke="#000" stroke-width="1"/><rect x="2" y="18" width="4" height="13" fill="#fff"/><path d="M10 17v15" stroke="#e00" stroke-width="1.5"/><path d="M6 26c4-8 6-8 10 0s6 2 10-2" fill="none" stroke="#36c" stroke-width="1.2"/><path d="M6 29h24" stroke="#000"/></svg>
<div class="a" style="left:4px;top:609px;width:32px;height:30px;background:#f0f0f0;border-top:1px solid #fff;border-left:1px solid #fff;border-right:2px solid #808080;border-bottom:2px solid #808080"></div>
<svg class="a" style="left:16px;top:622px" width="6" height="4" viewBox="0 0 6 4"><path d="M0 0h6L3 4z" fill="#000"/></svg>
<svg class="a" style="left:3px;top:907px" width="34" height="34" viewBox="0 0 34 34"><rect x="0.5" y="0.5" width="33" height="33" fill="none" stroke="#fff"/><rect x="1" y="1" width="32" height="32" fill="#231f20"/><g fill="none" stroke="#fff" stroke-width="1.4" stroke-linecap="round" stroke-linejoin="round"><path d="M2.5 28V4.5L8 13L14 4.5V11"/><path d="M14.5 15.5c-2-1-4 0.5-3.5 2.5s3 2 3.2 0.3c0.2-1.3-1.2-1.6-1.7-0.8"/><path d="M11.5 20.5l2 2.3H31L26 11.5"/><path d="M16 8L20.5 13.5L25.5 8.5M20.5 13.5V28"/><path d="M26 11.5L22.5 20H27"/></g></svg>
<svg class="a" style="left:3px;top:946px" width="6" height="30" viewBox="0 0 6 30"><path d="M0 1h6L3 4z" fill="#333"/><rect x="1" y="7" width="1" height="1" fill="#555"/><rect x="4" y="7" width="1" height="1" fill="#555"/><rect x="1" y="9" width="1" height="1" fill="#555"/><rect x="4" y="9" width="1" height="1" fill="#555"/><rect x="1" y="11" width="1" height="1" fill="#555"/><rect x="4" y="11" width="1" height="1" fill="#555"/><rect x="1" y="13" width="1" height="1" fill="#555"/><rect x="4" y="13" width="1" height="1" fill="#555"/><rect x="1" y="15" width="1" height="1" fill="#555"/><rect x="4" y="15" width="1" height="1" fill="#555"/><rect x="1" y="17" width="1" height="1" fill="#555"/><rect x="4" y="17" width="1" height="1" fill="#555"/><rect x="1" y="19" width="1" height="1" fill="#555"/><rect x="4" y="19" width="1" height="1" fill="#555"/><rect x="1" y="21" width="1" height="1" fill="#555"/><rect x="4" y="21" width="1" height="1" fill="#555"/><rect x="1" y="23" width="1" height="1" fill="#555"/><rect x="4" y="23" width="1" height="1" fill="#555"/><rect x="1" y="25" width="1" height="1" fill="#555"/><rect x="4" y="25" width="1" height="1" fill="#555"/><rect x="1" y="27" width="1" height="1" fill="#555"/><rect x="4" y="27" width="1" height="1" fill="#555"/><rect x="1" y="29" width="1" height="1" fill="#555"/><rect x="4" y="29" width="1" height="1" fill="#555"/></svg>
<svg class="a" style="left:3px;top:977px" width="6" height="20" viewBox="0 0 6 20"><path d="M0 1h6L3 4z" fill="#333"/><rect x="1" y="7" width="1" height="1" fill="#555"/><rect x="4" y="7" width="1" height="1" fill="#555"/><rect x="1" y="9" width="1" height="1" fill="#555"/><rect x="4" y="9" width="1" height="1" fill="#555"/><rect x="1" y="11" width="1" height="1" fill="#555"/><rect x="4" y="11" width="1" height="1" fill="#555"/><rect x="1" y="13" width="1" height="1" fill="#555"/><rect x="4" y="13" width="1" height="1" fill="#555"/><rect x="1" y="15" width="1" height="1" fill="#555"/><rect x="4" y="15" width="1" height="1" fill="#555"/><rect x="1" y="17" width="1" height="1" fill="#555"/><rect x="4" y="17" width="1" height="1" fill="#555"/><rect x="1" y="19" width="1" height="1" fill="#555"/><rect x="4" y="19" width="1" height="1" fill="#555"/></svg>
<div class="a" style="left:12px;top:945px;width:1610px;height:30px;background:#f0f0f0;border-top:2px solid #a0a0a0;border-left:2px solid #a0a0a0;border-bottom:1px solid #fff"></div>
<div class="a" style="left:20px;top:946px;width:160px;height:28px;background:#0e0e0e"></div>
<div class="a" style="left:19px;top:962px;width:1px;height:12px;background:#fff"></div>
<div class="a" style="left:179px;top:962px;width:1px;height:12px;background:#fff"></div>
<div class="t" style="left:52px;top:949px;color:#fff;font-weight:bold;font-size:12px">1</div>
<div class="t" style="left:52px;top:961px;color:#fff;font-weight:bold;font-size:12px">1</div>
<div class="t" style="left:211px;top:949px;font-weight:bold;font-size:12px">2</div>
<div class="t" style="left:370px;top:949px;font-weight:bold;font-size:12px">3</div>
<div class="t" style="left:530px;top:949px;font-weight:bold;font-size:12px">4</div>
<div class="t" style="left:690px;top:949px;font-weight:bold;font-size:12px">5</div>
<div class="t" style="left:849px;top:949px;font-weight:bold;font-size:12px">6</div>
<div class="t" style="left:1008px;top:949px;font-weight:bold;font-size:12px">7</div>
<div class="t" style="left:1168px;top:949px;font-weight:bold;font-size:12px">8</div>
<div class="t" style="left:1328px;top:949px;font-weight:bold;font-size:12px">9</div>
<div class="t" style="left:1483px;top:949px;font-weight:bold;font-size:12px">10</div>
<div class="a" style="left:338px;top:963px;width:2px;height:10px;background:#000"></div>
<div class="a" style="left:498px;top:963px;width:2px;height:10px;background:#000"></div>
<div class="a" style="left:657px;top:963px;width:2px;height:10px;background:#000"></div>
<div class="a" style="left:817px;top:963px;width:2px;height:10px;background:#000"></div>
<div class="a" style="left:976px;top:963px;width:2px;height:10px;background:#000"></div>
<div class="a" style="left:1136px;top:963px;width:2px;height:10px;background:#000"></div>
<div class="a" style="left:1296px;top:963px;width:2px;height:10px;background:#000"></div>
<div class="a" style="left:1455px;top:963px;width:2px;height:10px;background:#000"></div>
<div class="a" style="left:1626px;top:951px;width:67px;height:19px;background:#fff;border-top:2px solid #808080;border-left:2px solid #808080;border-bottom:1px solid #e3e3e3;border-right:1px solid #e3e3e3"></div>
<div class="t" style="left:1629px;top:954px;font-size:12px">1.00</div>
<div class="a" style="left:1697px;top:947px;width:26px;height:26px;background:#f0f0f0;border-top:1px solid #fff;border-left:1px solid #fff;border-right:1px solid #a0a0a0;border-bottom:1px solid #a0a0a0"></div>
<svg class="a" style="left:1698px;top:949px" width="24" height="24" viewBox="0 0 24 24"><rect x="5" y="9" width="1.5" height="6" fill="#333"/><path d="M7 12l4-3v6zM12 12l4-3v6z" fill="#777"/><rect x="17" y="10" width="1" height="4" fill="#333"/></svg>
<div class="a" style="left:1725px;top:947px;width:26px;height:26px;background:#f0f0f0;border-top:1px solid #fff;border-left:1px solid #fff;border-right:1px solid #a0a0a0;border-bottom:1px solid #a0a0a0"></div>
<svg class="a" style="left:1726px;top:949px" width="24" height="24" viewBox="0 0 24 24"><rect x="5" y="7" width="2.5" height="10" fill="#555"/><path d="M9 12l9-6v12z" fill="#888"/></svg>
<div class="a" style="left:1753px;top:947px;width:26px;height:26px;background:#f0f0f0;border-top:1px solid #fff;border-left:1px solid #fff;border-right:1px solid #a0a0a0;border-bottom:1px solid #a0a0a0"></div>
<svg class="a" style="left:1754px;top:949px" width="24" height="24" viewBox="0 0 24 24"><rect x="5" y="6" width="1.5" height="12" fill="#d00"/><path d="M9 12l9-6v12z" fill="#888"/></svg>
<div class="a" style="left:1781px;top:947px;width:26px;height:26px;background:#f0f0f0;border-top:1px solid #fff;border-left:1px solid #fff;border-right:1px solid #a0a0a0;border-bottom:1px solid #a0a0a0"></div>
<svg class="a" style="left:1782px;top:949px" width="24" height="24" viewBox="0 0 24 24"><path d="M6 12l12-7v14z" fill="#888"/></svg>
<div class="a" style="left:1809px;top:947px;width:26px;height:26px;background:#f0f0f0;border-top:1px solid #fff;border-left:1px solid #fff;border-right:1px solid #a0a0a0;border-bottom:1px solid #a0a0a0"></div>
<svg class="a" style="left:1810px;top:949px" width="24" height="24" viewBox="0 0 24 24"><path d="M8 5l12 7-12 7z" fill="#888"/></svg>
<div class="a" style="left:1837px;top:947px;width:26px;height:26px;background:#f0f0f0;border-top:1px solid #fff;border-left:1px solid #fff;border-right:1px solid #a0a0a0;border-bottom:1px solid #a0a0a0"></div>
<svg class="a" style="left:1838px;top:949px" width="24" height="24" viewBox="0 0 24 24"><path d="M5 6l9 6-9 6z" fill="#888"/><rect x="16" y="6" width="1.5" height="12" fill="#d00"/></svg>
<div class="a" style="left:1865px;top:947px;width:26px;height:26px;background:#f0f0f0;border-top:1px solid #fff;border-left:1px solid #fff;border-right:1px solid #a0a0a0;border-bottom:1px solid #a0a0a0"></div>
<svg class="a" style="left:1866px;top:949px" width="24" height="24" viewBox="0 0 24 24"><path d="M5 6l9 6-9 6z" fill="#555"/><rect x="16" y="7" width="2.5" height="10" fill="#555"/></svg>
<div class="a" style="left:1893px;top:947px;width:26px;height:26px;background:#f0f0f0;border-top:1px solid #fff;border-left:1px solid #fff;border-right:1px solid #a0a0a0;border-bottom:1px solid #a0a0a0"></div>
<svg class="a" style="left:1894px;top:949px" width="24" height="24" viewBox="0 0 24 24"><path d="M3 9l4 3-4 3zM8 9l4 3-4 3zM13 9l4 3-4 3z" fill="#666"/><rect x="18" y="9" width="1.5" height="6" fill="#333"/></svg>
<div class="a" style="left:12px;top:977px;width:66px;height:20px;background:#fff;border-top:2px solid #808080;border-left:2px solid #808080"></div>
<div class="t" style="left:15px;top:980px;font-size:12px">1.00</div>
<div class="a" style="left:82px;top:977px;width:66px;height:20px;background:#fff;border-top:2px solid #808080;border-left:2px solid #808080"></div>
<div class="t" style="left:85px;top:980px;font-size:12px">1.00</div>
<div class="a" style="left:150px;top:977px;width:1451px;height:20px;background:#b4b4b4;border-top:2px solid #808080;border-left:2px solid #f0f0f0"></div>
<div class="a" style="left:158px;top:981px;width:54px;height:16px;background:#f0f0f0;border-top:1px solid #fff;border-left:1px solid #fff"></div>
<svg class="a" style="left:162px;top:983px" width="46" height="14" viewBox="0 0 46 14"><rect x="1" y="1" width="8" height="13" fill="none" stroke="#ddd"/><rect x="36" y="1" width="8" height="13" fill="none" stroke="#ddd"/><text x="13" y="12" font-family="Liberation Sans" font-size="12" fill="#ddd">1</text></svg>
<div class="a" style="left:1604px;top:977px;width:67px;height:20px;background:#fff;border-top:2px solid #808080;border-left:2px solid #808080"></div>
<div class="t" style="left:1607px;top:980px;font-size:12px">10.00</div>
<div class="a" style="left:1675px;top:977px;width:66px;height:20px;background:#fff;border-top:2px solid #808080;border-left:2px solid #808080"></div>
<div class="t" style="left:1678px;top:980px;font-size:12px">521.00</div>
<svg class="a" style="left:1746px;top:984px" width="18" height="10" viewBox="0 0 18 10"><path d="M1 1h15L8.5 9z" fill="#000"/></svg>
<div class="a" style="left:1768px;top:977px;width:98px;height:20px;background:#f0f0f0;border-top:2px solid #808080;border-left:2px solid #808080"></div>
<div class="t" style="left:1771px;top:981px;font-size:11px">No Character Set</div>
<svg class="a" style="left:1872px;top:982px" width="30" height="15" viewBox="0 0 30 15"><circle cx="22" cy="8" r="4" fill="none" stroke="#000" stroke-width="2.5"/><path d="M2 8h16M4 8v4M8 8v3" stroke="#000" stroke-width="2.5"/></svg>
<div class="a" style="left:1903px;top:977px;width:14px;height:20px;border-left:2px solid #808080;border-top:2px solid #808080"></div>
<svg class="a" style="left:1905px;top:980px" width="12" height="16" viewBox="0 0 12 16"><path d="M1 3h11v11H1z" fill="#fff" stroke="#000"/><path d="M2 8c3-3 7-3 10 0M2 11c3-3 7-3 10 0" fill="none" stroke="#000"/></svg>
<svg class="a" style="left:1494px;top:149px" width="423" height="8" viewBox="0 0 423 8"><path d="M3 0L7 3.5L3 7z" fill="#333"/><rect x="11" y="1" width="1" height="1" fill="#555"/><rect x="11" y="5" width="1" height="1" fill="#555"/><rect x="13" y="1" width="1" height="1" fill="#555"/><rect x="13" y="5" width="1" height="1" fill="#555"/><rect x="15" y="1" width="1" height="1" fill="#555"/><rect x="15" y="5" width="1" height="1" fill="#555"/><rect x="17" y="1" width="1" height="1" fill="#555"/><rect x="17" y="5" width="1" height="1" fill="#555"/><rect x="19" y="1" width="1" height="1" fill="#555"/><rect x="19" y="5" width="1" height="1" fill="#555"/><rect x="21" y="1" width="1" height="1" fill="#555"/><rect x="21" y="5" width="1" height="1" fill="#555"/><rect x="23" y="1" width="1" height="1" fill="#555"/><rect x="23" y="5" width="1" height="1" fill="#555"/><rect x="25" y="1" width="1" height="1" fill="#555"/><rect x="25" y="5" width="1" height="1" fill="#555"/><rect x="27" y="1" width="1" height="1" fill="#555"/><rect x="27" y="5" width="1" height="1" fill="#555"/><rect x="29" y="1" width="1" height="1" fill="#555"/><rect x="29" y="5" width="1" height="1" fill="#555"/><rect x="31" y="1" width="1" height="1" fill="#555"/><rect x="31" y="5" width="1" height="1" fill="#555"/><rect x="33" y="1" width="1" height="1" fill="#555"/><rect x="33" y="5" width="1" height="1" fill="#555"/><rect x="35" y="1" width="1" height="1" fill="#555"/><rect x="35" y="5" width="1" height="1" fill="#555"/><rect x="37" y="1" width="1" height="1" fill="#555"/><rect x="37" y="5" width="1" height="1" fill="#555"/><rect x="39" y="1" width="1" height="1" fill="#555"/><rect x="39" y="5" width="1" height="1" fill="#555"/><rect x="41" y="1" width="1" height="1" fill="#555"/><rect x="41" y="5" width="1" height="1" fill="#555"/><rect x="43" y="1" width="1" height="1" fill="#555"/><rect x="43" y="5" width="1" height="1" fill="#555"/><rect x="45" y="1" width="1" height="1" fill="#555"/><rect x="45" y="5" width="1" height="1" fill="#555"/><rect x="47" y="1" width="1" height="1" fill="#555"/><rect x="47" y="5" width="1" height="1" fill="#555"/><rect x="49" y="1" width="1" height="1" fill="#555"/><rect x="49" y="5" width="1" height="1" fill="#555"/><rect x="51" y="1" width="1" height="1" fill="#555"/><rect x="51" y="5" width="1" height="1" fill="#555"/><rect x="53" y="1" width="1" height="1" fill="#555"/><rect x="53" y="5" width="1" height="1" fill="#555"/><rect x="55" y="1" width="1" height="1" fill="#555"/><rect x="55" y="5" width="1" height="1" fill="#555"/><rect x="57" y="1" width="1" height="1" fill="#555"/><rect x="57" y="5" width="1" height="1" fill="#555"/><rect x="59" y="1" width="1" height="1" fill="#555"/><rect x="59" y="5" width="1" height="1" fill="#555"/><rect x="61" y="1" width="1" height="1" fill="#555"/><rect x="61" y="5" width="1" height="1" fill="#555"/><rect x="63" y="1" width="1" height="1" fill="#555"/><rect x="63" y="5" width="1" height="1" fill="#555"/><rect x="65" y="1" width="1" height="1" fill="#555"/><rect x="65" y="5" width="1" height="1" fill="#555"/><rect x="67" y="1" width="1" height="1" fill="#555"/><rect x="67" y="5" width="1" height="1" fill="#555"/><rect x="69" y="1" width="1" height="1" fill="#555"/><rect x="69" y="5" width="1" height="1" fill="#555"/><rect x="71" y="1" width="1" height="1" fill="#555"/><rect x="71" y="5" width="1" height="1" fill="#555"/><rect x="73" y="1" width="1" height="1" fill="#555"/><rect x="73" y="5" width="1" height="1" fill="#555"/><rect x="75" y="1" width="1" height="1" fill="#555"/><rect x="75" y="5" width="1" height="1" fill="#555"/><rect x="77" y="1" width="1" height="1" fill="#555"/><rect x="77" y="5" width="1" height="1" fill="#555"/><rect x="79" y="1" width="1" height="1" fill="#555"/><rect x="79" y="5" width="1" height="1" fill="#555"/><rect x="81" y="1" width="1" height="1" fill="#555"/><rect x="81" y="5" width="1" height="1" fill="#555"/><rect x="83" y="1" width="1" height="1" fill="#555"/><rect x="83" y="5" width="1" height="1" fill="#555"/><rect x="85" y="1" width="1" height="1" fill="#555"/><rect x="85" y="5" width="1" height="1" fill="#555"/><rect x="87" y="1" width="1" height="1" fill="#555"/><rect x="87" y="5" width="1" height="1" fill="#555"/><rect x="89" y="1" width="1" height="1" fill="#555"/><rect x="89" y="5" width="1" height="1" fill="#555"/><rect x="91" y="1" width="1" height="1" fill="#555"/><rect x="91" y="5" width="1" height="1" fill="#555"/><rect x="93" y="1" width="1" height="1" fill="#555"/><rect x="93" y="5" width="1" height="1" fill="#555"/><rect x="95" y="1" width="1" height="1" fill="#555"/><rect x="95" y="5" width="1" height="1" fill="#555"/><rect x="97" y="1" width="1" height="1" fill="#555"/><rect x="97" y="5" width="1" height="1" fill="#555"/><rect x="99" y="1" width="1" height="1" fill="#555"/><rect x="99" y="5" width="1" height="1" fill="#555"/><rect x="101" y="1" width="1" height="1" fill="#555"/><rect x="101" y="5" width="1" height="1" fill="#555"/><rect x="103" y="1" width="1" height="1" fill="#555"/><rect x="103" y="5" width="1" height="1" fill="#555"/><rect x="105" y="1" width="1" height="1" fill="#555"/><rect x="105" y="5" width="1" height="1" fill="#555"/><rect x="107" y="1" width="1" height="1" fill="#555"/><rect x="107" y="5" width="1" height="1" fill="#555"/><rect x="109" y="1" width="1" height="1" fill="#555"/><rect x="109" y="5" width="1" height="1" fill="#555"/><rect x="111" y="1" width="1" height="1" fill="#555"/><rect x="111" y="5" width="1" height="1" fill="#555"/><rect x="113" y="1" width="1" height="1" fill="#555"/><rect x="113" y="5" width="1" height="1" fill="#555"/><rect x="115" y="1" width="1" height="1" fill="#555"/><rect x="115" y="5" width="1" height="1" fill="#555"/><rect x="117" y="1" width="1" height="1" fill="#555"/><rect x="117" y="5" width="1" height="1" fill="#555"/><rect x="119" y="1" width="1" height="1" fill="#555"/><rect x="119" y="5" width="1" height="1" fill="#555"/><rect x="121" y="1" width="1" height="1" fill="#555"/><rect x="121" y="5" width="1" height="1" fill="#555"/><rect x="123" y="1" width="1" height="1" fill="#555"/><rect x="123" y="5" width="1" height="1" fill="#555"/><rect x="125" y="1" width="1" height="1" fill="#555"/><rect x="125" y="5" width="1" height="1" fill="#555"/><rect x="127" y="1" width="1" height="1" fill="#555"/><rect x="127" y="5" width="1" height="1" fill="#555"/><rect x="129" y="1" width="1" height="1" fill="#555"/><rect x="129" y="5" width="1" height="1" fill="#555"/><rect x="131" y="1" width="1" height="1" fill="#555"/><rect x="131" y="5" width="1" height="1" fill="#555"/><rect x="133" y="1" width="1" height="1" fill="#555"/><rect x="133" y="5" width="1" height="1" fill="#555"/><rect x="135" y="1" width="1" height="1" fill="#555"/><rect x="135" y="5" width="1" height="1" fill="#555"/><rect x="137" y="1" width="1" height="1" fill="#555"/><rect x="137" y="5" width="1" height="1" fill="#555"/><rect x="139" y="1" width="1" height="1" fill="#555"/><rect x="139" y="5" width="1" height="1" fill="#555"/><rect x="141" y="1" width="1" height="1" fill="#555"/><rect x="141" y="5" width="1" height="1" fill="#555"/><rect x="143" y="1" width="1" height="1" fill="#555"/><rect x="143" y="5" width="1" height="1" fill="#555"/><rect x="145" y="1" width="1" height="1" fill="#555"/><rect x="145" y="5" width="1" height="1" fill="#555"/><rect x="147" y="1" width="1" height="1" fill="#555"/><rect x="147" y="5" width="1" height="1" fill="#555"/><rect x="149" y="1" width="1" height="1" fill="#555"/><rect x="149" y="5" width="1" height="1" fill="#555"/><rect x="151" y="1" width="1" height="1" fill="#555"/><rect x="151" y="5" width="1" height="1" fill="#555"/><rect x="153" y="1" width="1" height="1" fill="#555"/><rect x="153" y="5" width="1" height="1" fill="#555"/><rect x="155" y="1" width="1" height="1" fill="#555"/><rect x="155" y="5" width="1" height="1" fill="#555"/><rect x="157" y="1" width="1" height="1" fill="#555"/><rect x="157" y="5" width="1" height="1" fill="#555"/><rect x="159" y="1" width="1" height="1" fill="#555"/><rect x="159" y="5" width="1" height="1" fill="#555"/><rect x="161" y="1" width="1" height="1" fill="#555"/><rect x="161" y="5" width="1" height="1" fill="#555"/><rect x="163" y="1" width="1" height="1" fill="#555"/><rect x="163" y="5" width="1" height="1" fill="#555"/><rect x="165" y="1" width="1" height="1" fill="#555"/><rect x="165" y="5" width="1" height="1" fill="#555"/><rect x="167" y="1" width="1" height="1" fill="#555"/><rect x="167" y="5" width="1" height="1" fill="#555"/><rect x="169" y="1" width="1" height="1" fill="#555"/><rect x="169" y="5" width="1" height="1" fill="#555"/><rect x="171" y="1" width="1" height="1" fill="#555"/><rect x="171" y="5" width="1" height="1" fill="#555"/><rect x="173" y="1" width="1" height="1" fill="#555"/><rect x="173" y="5" width="1" height="1" fill="#555"/><rect x="175" y="1" width="1" height="1" fill="#555"/><rect x="175" y="5" width="1" height="1" fill="#555"/><rect x="177" y="1" width="1" height="1" fill="#555"/><rect x="177" y="5" width="1" height="1" fill="#555"/><rect x="179" y="1" width="1" height="1" fill="#555"/><rect x="179" y="5" width="1" height="1" fill="#555"/><rect x="181" y="1" width="1" height="1" fill="#555"/><rect x="181" y="5" width="1" height="1" fill="#555"/><rect x="183" y="1" width="1" height="1" fill="#555"/><rect x="183" y="5" width="1" height="1" fill="#555"/><rect x="185" y="1" width="1" height="1" fill="#555"/><rect x="185" y="5" width="1" height="1" fill="#555"/><rect x="187" y="1" width="1" height="1" fill="#555"/><rect x="187" y="5" width="1" height="1" fill="#555"/><rect x="189" y="1" width="1" height="1" fill="#555"/><rect x="189" y="5" width="1" height="1" fill="#555"/><rect x="191" y="1" width="1" height="1" fill="#555"/><rect x="191" y="5" width="1" height="1" fill="#555"/><rect x="193" y="1" width="1" height="1" fill="#555"/><rect x="193" y="5" width="1" height="1" fill="#555"/><rect x="195" y="1" width="1" height="1" fill="#555"/><rect x="195" y="5" width="1" height="1" fill="#555"/><rect x="197" y="1" width="1" height="1" fill="#555"/><rect x="197" y="5" width="1" height="1" fill="#555"/><rect x="199" y="1" width="1" height="1" fill="#555"/><rect x="199" y="5" width="1" height="1" fill="#555"/><rect x="201" y="1" width="1" height="1" fill="#555"/><rect x="201" y="5" width="1" height="1" fill="#555"/><rect x="203" y="1" width="1" height="1" fill="#555"/><rect x="203" y="5" width="1" height="1" fill="#555"/><rect x="205" y="1" width="1" height="1" fill="#555"/><rect x="205" y="5" width="1" height="1" fill="#555"/><rect x="207" y="1" width="1" height="1" fill="#555"/><rect x="207" y="5" width="1" height="1" fill="#555"/><rect x="209" y="1" width="1" height="1" fill="#555"/><rect x="209" y="5" width="1" height="1" fill="#555"/><rect x="211" y="1" width="1" height="1" fill="#555"/><rect x="211" y="5" width="1" height="1" fill="#555"/><rect x="213" y="1" width="1" height="1" fill="#555"/><rect x="213" y="5" width="1" height="1" fill="#555"/><rect x="215" y="1" width="1" height="1" fill="#555"/><rect x="215" y="5" width="1" height="1" fill="#555"/><rect x="217" y="1" width="1" height="1" fill="#555"/><rect x="217" y="5" width="1" height="1" fill="#555"/><rect x="219" y="1" width="1" height="1" fill="#555"/><rect x="219" y="5" width="1" height="1" fill="#555"/><rect x="221" y="1" width="1" height="1" fill="#555"/><rect x="221" y="5" width="1" height="1" fill="#555"/><rect x="223" y="1" width="1" height="1" fill="#555"/><rect x="223" y="5" width="1" height="1" fill="#555"/><rect x="225" y="1" width="1" height="1" fill="#555"/><rect x="225" y="5" width="1" height="1" fill="#555"/><rect x="227" y="1" width="1" height="1" fill="#555"/><rect x="227" y="5" width="1" height="1" fill="#555"/><rect x="229" y="1" width="1" height="1" fill="#555"/><rect x="229" y="5" width="1" height="1" fill="#555"/><rect x="231" y="1" width="1" height="1" fill="#555"/><rect x="231" y="5" width="1" height="1" fill="#555"/><rect x="233" y="1" width="1" height="1" fill="#555"/><rect x="233" y="5" width="1" height="1" fill="#555"/><rect x="235" y="1" width="1" height="1" fill="#555"/><rect x="235" y="5" width="1" height="1" fill="#555"/><rect x="237" y="1" width="1" height="1" fill="#555"/><rect x="237" y="5" width="1" height="1" fill="#555"/><rect x="239" y="1" width="1" height="1" fill="#555"/><rect x="239" y="5" width="1" height="1" fill="#555"/><rect x="241" y="1" width="1" height="1" fill="#555"/><rect x="241" y="5" width="1" height="1" fill="#555"/><rect x="243" y="1" width="1" height="1" fill="#555"/><rect x="243" y="5" width="1" height="1" fill="#555"/><rect x="245" y="1" width="1" height="1" fill="#555"/><rect x="245" y="5" width="1" height="1" fill="#555"/><rect x="247" y="1" width="1" height="1" fill="#555"/><rect x="247" y="5" width="1" height="1" fill="#555"/><rect x="249" y="1" width="1" height="1" fill="#555"/><rect x="249" y="5" width="1" height="1" fill="#555"/><rect x="251" y="1" width="1" height="1" fill="#555"/><rect x="251" y="5" width="1" height="1" fill="#555"/><rect x="253" y="1" width="1" height="1" fill="#555"/><rect x="253" y="5" width="1" height="1" fill="#555"/><rect x="255" y="1" width="1" height="1" fill="#555"/><rect x="255" y="5" width="1" height="1" fill="#555"/><rect x="257" y="1" width="1" height="1" fill="#555"/><rect x="257" y="5" width="1" height="1" fill="#555"/><rect x="259" y="1" width="1" height="1" fill="#555"/><rect x="259" y="5" width="1" height="1" fill="#555"/><rect x="261" y="1" width="1" height="1" fill="#555"/><rect x="261" y="5" width="1" height="1" fill="#555"/><rect x="263" y="1" width="1" height="1" fill="#555"/><rect x="263" y="5" width="1" height="1" fill="#555"/><rect x="265" y="1" width="1" height="1" fill="#555"/><rect x="265" y="5" width="1" height="1" fill="#555"/><rect x="267" y="1" width="1" height="1" fill="#555"/><rect x="267" y="5" width="1" height="1" fill="#555"/><rect x="269" y="1" width="1" height="1" fill="#555"/><rect x="269" y="5" width="1" height="1" fill="#555"/><rect x="271" y="1" width="1" height="1" fill="#555"/><rect x="271" y="5" width="1" height="1" fill="#555"/><rect x="273" y="1" width="1" height="1" fill="#555"/><rect x="273" y="5" width="1" height="1" fill="#555"/><rect x="275" y="1" width="1" height="1" fill="#555"/><rect x="275" y="5" width="1" height="1" fill="#555"/><rect x="277" y="1" width="1" height="1" fill="#555"/><rect x="277" y="5" width="1" height="1" fill="#555"/><rect x="279" y="1" width="1" height="1" fill="#555"/><rect x="279" y="5" width="1" height="1" fill="#555"/><rect x="281" y="1" width="1" height="1" fill="#555"/><rect x="281" y="5" width="1" height="1" fill="#555"/><rect x="283" y="1" width="1" height="1" fill="#555"/><rect x="283" y="5" width="1" height="1" fill="#555"/><rect x="285" y="1" width="1" height="1" fill="#555"/><rect x="285" y="5" width="1" height="1" fill="#555"/><rect x="287" y="1" width="1" height="1" fill="#555"/><rect x="287" y="5" width="1" height="1" fill="#555"/><rect x="289" y="1" width="1" height="1" fill="#555"/><rect x="289" y="5" width="1" height="1" fill="#555"/><rect x="291" y="1" width="1" height="1" fill="#555"/><rect x="291" y="5" width="1" height="1" fill="#555"/><rect x="293" y="1" width="1" height="1" fill="#555"/><rect x="293" y="5" width="1" height="1" fill="#555"/><rect x="295" y="1" width="1" height="1" fill="#555"/><rect x="295" y="5" width="1" height="1" fill="#555"/><rect x="297" y="1" width="1" height="1" fill="#555"/><rect x="297" y="5" width="1" height="1" fill="#555"/><rect x="299" y="1" width="1" height="1" fill="#555"/><rect x="299" y="5" width="1" height="1" fill="#555"/><rect x="301" y="1" width="1" height="1" fill="#555"/><rect x="301" y="5" width="1" height="1" fill="#555"/><rect x="303" y="1" width="1" height="1" fill="#555"/><rect x="303" y="5" width="1" height="1" fill="#555"/><rect x="305" y="1" width="1" height="1" fill="#555"/><rect x="305" y="5" width="1" height="1" fill="#555"/><rect x="307" y="1" width="1" height="1" fill="#555"/><rect x="307" y="5" width="1" height="1" fill="#555"/><rect x="309" y="1" width="1" height="1" fill="#555"/><rect x="309" y="5" width="1" height="1" fill="#555"/><rect x="311" y="1" width="1" height="1" fill="#555"/><rect x="311" y="5" width="1" height="1" fill="#555"/><rect x="313" y="1" width="1" height="1" fill="#555"/><rect x="313" y="5" width="1" height="1" fill="#555"/><rect x="315" y="1" width="1" height="1" fill="#555"/><rect x="315" y="5" width="1" height="1" fill="#555"/><rect x="317" y="1" width="1" height="1" fill="#555"/><rect x="317" y="5" width="1" height="1" fill="#555"/><rect x="319" y="1" width="1" height="1" fill="#555"/><rect x="319" y="5" width="1" height="1" fill="#555"/><rect x="321" y="1" width="1" height="1" fill="#555"/><rect x="321" y="5" width="1" height="1" fill="#555"/><rect x="323" y="1" width="1" height="1" fill="#555"/><rect x="323" y="5" width="1" height="1" fill="#555"/><rect x="325" y="1" width="1" height="1" fill="#555"/><rect x="325" y="5" width="1" height="1" fill="#555"/><rect x="327" y="1" width="1" height="1" fill="#555"/><rect x="327" y="5" width="1" height="1" fill="#555"/><rect x="329" y="1" width="1" height="1" fill="#555"/><rect x="329" y="5" width="1" height="1" fill="#555"/><rect x="331" y="1" width="1" height="1" fill="#555"/><rect x="331" y="5" width="1" height="1" fill="#555"/><rect x="333" y="1" width="1" height="1" fill="#555"/><rect x="333" y="5" width="1" height="1" fill="#555"/><rect x="335" y="1" width="1" height="1" fill="#555"/><rect x="335" y="5" width="1" height="1" fill="#555"/><rect x="337" y="1" width="1" height="1" fill="#555"/><rect x="337" y="5" width="1" height="1" fill="#555"/><rect x="339" y="1" width="1" height="1" fill="#555"/><rect x="339" y="5" width="1" height="1" fill="#555"/><rect x="341" y="1" width="1" height="1" fill="#555"/><rect x="341" y="5" width="1" height="1" fill="#555"/><rect x="343" y="1" width="1" height="1" fill="#555"/><rect x="343" y="5" width="1" height="1" fill="#555"/><rect x="345" y="1" width="1" height="1" fill="#555"/><rect x="345" y="5" width="1" height="1" fill="#555"/><rect x="347" y="1" width="1" height="1" fill="#555"/><rect x="347" y="5" width="1" height="1" fill="#555"/><rect x="349" y="1" width="1" height="1" fill="#555"/><rect x="349" y="5" width="1" height="1" fill="#555"/><rect x="351" y="1" width="1" height="1" fill="#555"/><rect x="351" y="5" width="1" height="1" fill="#555"/><rect x="353" y="1" width="1" height="1" fill="#555"/><rect x="353" y="5" width="1" height="1" fill="#555"/><rect x="355" y="1" width="1" height="1" fill="#555"/><rect x="355" y="5" width="1" height="1" fill="#555"/><rect x="357" y="1" width="1" height="1" fill="#555"/><rect x="357" y="5" width="1" height="1" fill="#555"/><rect x="359" y="1" width="1" height="1" fill="#555"/><rect x="359" y="5" width="1" height="1" fill="#555"/><rect x="361" y="1" width="1" height="1" fill="#555"/><rect x="361" y="5" width="1" height="1" fill="#555"/><rect x="363" y="1" width="1" height="1" fill="#555"/><rect x="363" y="5" width="1" height="1" fill="#555"/><rect x="365" y="1" width="1" height="1" fill="#555"/><rect x="365" y="5" width="1" height="1" fill="#555"/><rect x="367" y="1" width="1" height="1" fill="#555"/><rect x="367" y="5" width="1" height="1" fill="#555"/><rect x="369" y="1" width="1" height="1" fill="#555"/><rect x="369" y="5" width="1" height="1" fill="#555"/><rect x="371" y="1" width="1" height="1" fill="#555"/><rect x="371" y="5" width="1" height="1" fill="#555"/><rect x="373" y="1" width="1" height="1" fill="#555"/><rect x="373" y="5" width="1" height="1" fill="#555"/><rect x="375" y="1" width="1" height="1" fill="#555"/><rect x="375" y="5" width="1" height="1" fill="#555"/><rect x="377" y="1" width="1" height="1" fill="#555"/><rect x="377" y="5" width="1" height="1" fill="#555"/><rect x="379" y="1" width="1" height="1" fill="#555"/><rect x="379" y="5" width="1" height="1" fill="#555"/><rect x="381" y="1" width="1" height="1" fill="#555"/><rect x="381" y="5" width="1" height="1" fill="#555"/><rect x="383" y="1" width="1" height="1" fill="#555"/><rect x="383" y="5" width="1" height="1" fill="#555"/><rect x="385" y="1" width="1" height="1" fill="#555"/><rect x="385" y="5" width="1" height="1" fill="#555"/><rect x="387" y="1" width="1" height="1" fill="#555"/><rect x="387" y="5" width="1" height="1" fill="#555"/><rect x="389" y="1" width="1" height="1" fill="#555"/><rect x="389" y="5" width="1" height="1" fill="#555"/><rect x="391" y="1" width="1" height="1" fill="#555"/><rect x="391" y="5" width="1" height="1" fill="#555"/><rect x="393" y="1" width="1" height="1" fill="#555"/><rect x="393" y="5" width="1" height="1" fill="#555"/><rect x="395" y="1" width="1" height="1" fill="#555"/><rect x="395" y="5" width="1" height="1" fill="#555"/><rect x="397" y="1" width="1" height="1" fill="#555"/><rect x="397" y="5" width="1" height="1" fill="#555"/><rect x="399" y="1" width="1" height="1" fill="#555"/><rect x="399" y="5" width="1" height="1" fill="#555"/><rect x="401" y="1" width="1" height="1" fill="#555"/><rect x="401" y="5" width="1" height="1" fill="#555"/><rect x="403" y="1" width="1" height="1" fill="#555"/><rect x="403" y="5" width="1" height="1" fill="#555"/><rect x="405" y="1" width="1" height="1" fill="#555"/><rect x="405" y="5" width="1" height="1" fill="#555"/><rect x="407" y="1" width="1" height="1" fill="#555"/><rect x="407" y="5" width="1" height="1" fill="#555"/><rect x="409" y="1" width="1" height="1" fill="#555"/><rect x="409" y="5" width="1" height="1" fill="#555"/><rect x="411" y="1" width="1" height="1" fill="#555"/><rect x="411" y="5" width="1" height="1" fill="#555"/><rect x="413" y="1" width="1" height="1" fill="#555"/><rect x="413" y="5" width="1" height="1" fill="#555"/><rect x="415" y="1" width="1" height="1" fill="#555"/><rect x="415" y="5" width="1" height="1" fill="#555"/><rect x="417" y="1" width="1" height="1" fill="#555"/><rect x="417" y="5" width="1" height="1" fill="#555"/><rect x="419" y="1" width="1" height="1" fill="#555"/><rect x="419" y="5" width="1" height="1" fill="#555"/><rect x="421" y="1" width="1" height="1" fill="#555"/><rect x="421" y="5" width="1" height="1" fill="#555"/></svg>
<div class="a" style="left:1494px;top:808px;width:423px;height:2px;background:#fff"></div>
<div class="a" style="left:1494px;top:810px;width:423px;height:2px;background:#6a6a6a"></div>
<div class="a" style="left:1495px;top:811px;width:1px;height:100px;background:#6a6a6a"></div>
<div class="t" style="left:1508px;top:814px;font-weight:bold;font-size:12px;color:#6d6d6d">Notes:</div>
<div class="a" style="left:1496px;top:828px;width:421px;height:84px;border-top:2px solid #6a6a6a;border-left:2px solid #6a6a6a;border-bottom:1px solid #fff;border-right:2px solid #6a6a6a"></div>
<div class="a" style="left:1498px;top:830px;width:417px;height:1px;background:#a0a0a0"></div>
<div class="a" style="left:1498px;top:830px;width:1px;height:80px;background:#a0a0a0"></div>
<div class="a" style="left:1496px;top:916px;width:136px;height:25px;background:#f0f0f0;border-top:1px solid #fff;border-left:1px solid #fff;border-right:2px solid #6a6a6a;border-bottom:2px solid #6a6a6a"></div>
<div class="t" style="left:1496px;top:921px;width:136px;text-align:center;font-size:11.5px;color:#8a8a8a">Select</div>
<div class="a" style="left:1636px;top:916px;width:141px;height:25px;background:#f0f0f0;border-top:1px solid #fff;border-left:1px solid #fff;border-right:2px solid #6a6a6a;border-bottom:2px solid #6a6a6a"></div>
<div class="t" style="left:1636px;top:921px;width:141px;text-align:center;font-size:11.5px;color:#000">Load Attributes</div>
<div class="a" style="left:1780px;top:916px;width:137px;height:25px;background:#f0f0f0;border-top:1px solid #fff;border-left:1px solid #fff;border-right:2px solid #6a6a6a;border-bottom:2px solid #6a6a6a"></div>
<div class="t" style="left:1780px;top:921px;width:137px;text-align:center;font-size:11.5px;color:#8a8a8a">Copy Tab</div>
</body></html>
